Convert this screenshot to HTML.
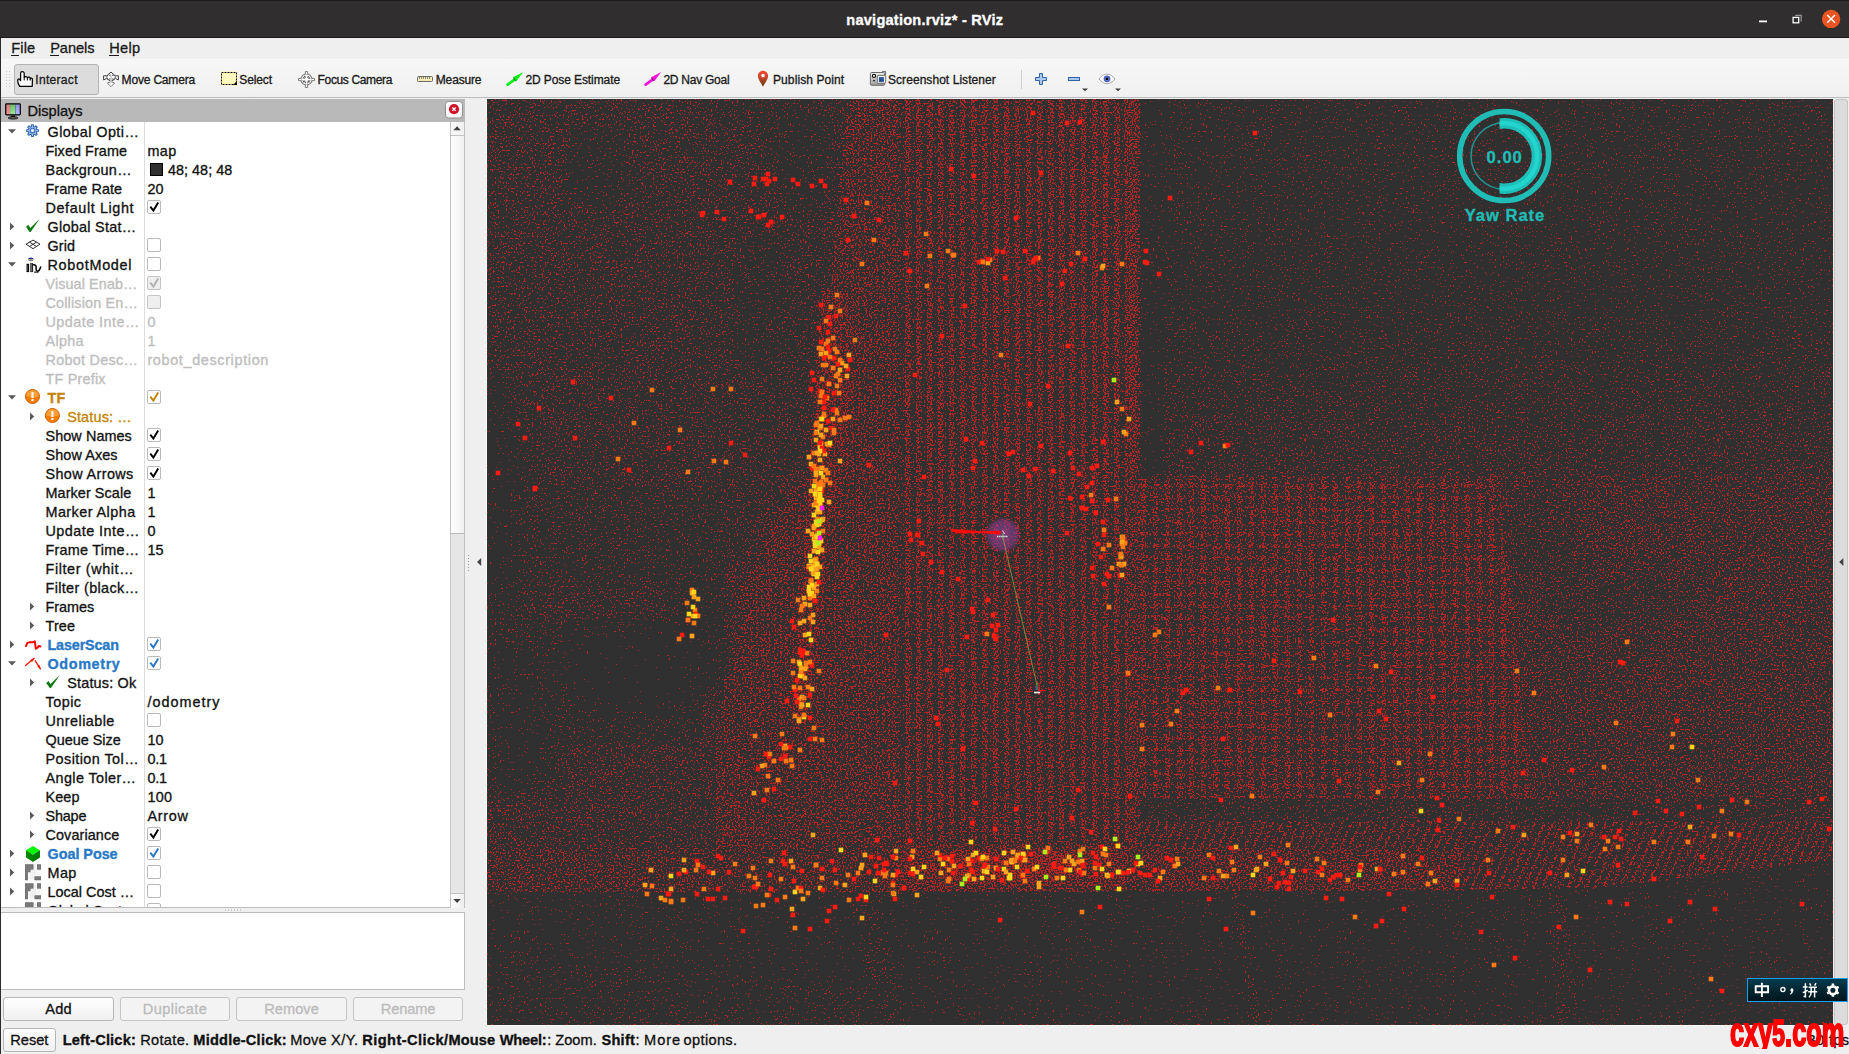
<!DOCTYPE html>
<html><head><meta charset="utf-8"><title>navigation.rviz* - RViz</title>
<style>
html,body{margin:0;padding:0;background:#efefef;}
body{width:1849px;height:1054px;overflow:hidden;position:relative;font-family:"Liberation Sans",sans-serif;}
.a{position:absolute;}
.t{position:absolute;white-space:pre;line-height:1;font-family:"Liberation Sans",sans-serif;-webkit-text-stroke:0.32px currentColor;}
svg{position:absolute;overflow:visible;}
.btn{position:absolute;box-sizing:border-box;border:1px solid #b6b6b6;border-radius:3px;background:linear-gradient(#fefefe,#f0f0f0);}
.cb{position:absolute;box-sizing:border-box;width:14px;height:14px;border:1px solid #b9b9b9;border-radius:2px;background:#fff;}
.cb.d{background:#efefef;border-color:#c4c4c4;}
</style></head><body>

<div class="a" style="left:0;top:0;width:1849px;height:38px;background:#302e2f;"></div>
<div class="a" style="left:0;top:0;width:1849px;height:1px;background:#1d1c1c;"></div>
<div class="a" style="left:0;top:37px;width:1849px;height:1px;background:#1b1a1a;"></div>
<span class="t" style="left:846.30px;top:12.67px;font-size:14.6px;font-weight:700;color:#fff;letter-spacing:0.220px;">navigation.rviz* - RViz</span>
<svg class="a" style="left:1739px;top:0" width="110" height="38" viewBox="1739 0 110 38">
<rect x="1759" y="20.5" width="8" height="1.8" fill="#fff"/>
<path d="M1795.2 15.4H1801.2V21.4" fill="none" stroke="#9a9a9a" stroke-width="1.2"/>
<rect x="1793.1" y="17.4" width="5.6" height="5.4" fill="none" stroke="#fff" stroke-width="1.3"/>
<circle cx="1831.1" cy="18.9" r="9.2" fill="#e95420"/>
<path d="M1827.2 15 L1835 22.8 M1835 15 L1827.2 22.8" stroke="#fff" stroke-width="1.5" fill="none"/>
</svg>
<div class="a" style="left:0;top:38px;width:1849px;height:22px;background:#efefef;"></div>
<div class="a" style="left:0;top:59px;width:1849px;height:1px;background:#f9f9f9;"></div>
<span class="t" style="left:11.30px;top:41.47px;font-size:14.6px;font-weight:400;color:#1a1a1a;letter-spacing:0.121px;">File</span>
<div class="a" style="left:11.3px;top:55px;width:7.5px;height:1.3px;background:#1a1a1a;"></div>
<span class="t" style="left:50.20px;top:41.47px;font-size:14.6px;font-weight:400;color:#1a1a1a;letter-spacing:-0.054px;">Panels</span>
<div class="a" style="left:50.2px;top:55px;width:9px;height:1.3px;background:#1a1a1a;"></div>
<span class="t" style="left:109.30px;top:41.47px;font-size:14.6px;font-weight:400;color:#1a1a1a;letter-spacing:0.246px;">Help</span>
<div class="a" style="left:109.3px;top:55px;width:10px;height:1.3px;background:#1a1a1a;"></div>
<div class="a" style="left:0;top:60px;width:1849px;height:37px;background:linear-gradient(#f7f7f7,#f0f0f0);"></div>
<div class="a" style="left:0;top:97px;width:1849px;height:1px;background:#bcbcbc;"></div>
<div class="a" style="left:0;top:98px;width:1849px;height:1px;background:#efefef;"></div>
<svg class="a" style="left:5px;top:70px" width="6" height="18"><g fill="#c8c8c8"><rect x="1" y="1" width="1" height="1"/><rect x="4" y="1" width="1" height="1"/><rect x="1" y="4" width="1" height="1"/><rect x="4" y="4" width="1" height="1"/><rect x="1" y="7" width="1" height="1"/><rect x="4" y="7" width="1" height="1"/><rect x="1" y="10" width="1" height="1"/><rect x="4" y="10" width="1" height="1"/><rect x="1" y="13" width="1" height="1"/><rect x="4" y="13" width="1" height="1"/><rect x="1" y="16" width="1" height="1"/><rect x="4" y="16" width="1" height="1"/></g></svg>
<div class="a" style="left:14px;top:64px;width:85px;height:31px;box-sizing:border-box;border:1px solid #b3b3b3;border-radius:3px;background:#dcdcdc;"></div>
<span class="t" style="left:35.30px;top:73.73px;font-size:12.0px;font-weight:400;color:#1a1a1a;letter-spacing:0.309px;">Interact</span>
<span class="t" style="left:121.60px;top:73.73px;font-size:12.0px;font-weight:400;color:#1a1a1a;letter-spacing:-0.178px;">Move Camera</span>
<span class="t" style="left:239.30px;top:73.73px;font-size:12.0px;font-weight:400;color:#1a1a1a;letter-spacing:-0.110px;">Select</span>
<span class="t" style="left:317.60px;top:73.73px;font-size:12.0px;font-weight:400;color:#1a1a1a;letter-spacing:-0.359px;">Focus Camera</span>
<span class="t" style="left:435.80px;top:73.73px;font-size:12.0px;font-weight:400;color:#1a1a1a;letter-spacing:-0.170px;">Measure</span>
<span class="t" style="left:525.40px;top:73.73px;font-size:12.0px;font-weight:400;color:#1a1a1a;letter-spacing:-0.090px;">2D Pose Estimate</span>
<span class="t" style="left:663.40px;top:73.73px;font-size:12.0px;font-weight:400;color:#1a1a1a;letter-spacing:-0.246px;">2D Nav Goal</span>
<span class="t" style="left:773.00px;top:73.73px;font-size:12.0px;font-weight:400;color:#1a1a1a;letter-spacing:0.096px;">Publish Point</span>
<span class="t" style="left:888.00px;top:73.73px;font-size:12.0px;font-weight:400;color:#1a1a1a;letter-spacing:0.056px;">Screenshot Listener</span>
<div class="a" style="left:1021px;top:70px;width:1px;height:19px;background:#d0d0d0;"></div>
<svg class="a" style="left:0;top:60px" width="1849" height="38" viewBox="0 60 1849 38">
<defs>
<linearGradient id="gpin" x1="0" y1="0" x2="0" y2="1"><stop offset="0" stop-color="#ee4a2c"/><stop offset="0.45" stop-color="#c8472a"/><stop offset="1" stop-color="#57390c"/></linearGradient>
<linearGradient id="gcam" x1="0" y1="0" x2="0" y2="1"><stop offset="0" stop-color="#f4f4f4"/><stop offset="1" stop-color="#9c9c9c"/></linearGradient>
<linearGradient id="gblue" x1="0" y1="0" x2="0" y2="1"><stop offset="0" stop-color="#3a68b0"/><stop offset="1" stop-color="#123a80"/></linearGradient>
</defs>
<!-- Interact: hand -->
<g transform="translate(17 71)">
<path d="M5.2 0.7C4.2 0.7 3.6 1.3 3.6 2.3V9.6L2.6 8.4C1.9 7.6 0.7 8 0.7 9.2C0.7 11.4 1.5 13.5 2.7 15.3H15.2C15.3 13.6 15.4 12 15.4 10.5V8.2C15.4 6.9 13.4 6.8 13.2 7.9V7.2C13 5.9 10.6 5.9 10.4 7.1V6.6C10.2 5.3 7.5 5.3 7.2 6.6V2.3C7.2 1.3 6.4 0.7 5.2 0.7Z" fill="#fff" stroke="#000" stroke-width="1.25" stroke-linejoin="round"/>
<path d="M7.2 6.6V9.4M10.4 7.1V9.4M13.2 7.9V9.6" stroke="#000" stroke-width="1" fill="none"/>
</g>
<!-- Move Camera -->
<g transform="translate(103 71.5)" fill="#fff" stroke="#3a3a3a" stroke-width="1">
<rect x="7" y="3.5" width="2" height="9" fill="#c9c9c9" stroke="none"/>
<path d="M8 0.6L3.8 4.3H0.6V8.4L3.4 7L8 9.8L12.6 7L15.4 8.4V4.3H12.2Z" fill="#fff" stroke-linejoin="round"/>
<ellipse cx="8" cy="5.6" rx="4.4" ry="2" fill="none" stroke-dasharray="1.6 1.1"/>
<path d="M4.4 11.6L8 15.2L11.6 11.6L8 9.9Z" stroke="#7c7c7c" fill="#fff"/>
<rect x="7.2" y="4" width="1.6" height="7.5" fill="#c9c9c9" stroke="none"/>
</g>
<!-- Select -->
<g transform="translate(221 72)">
<rect x="0.5" y="0.5" width="15" height="12" fill="#fdf7c0" stroke="#fff79a" stroke-width="2"/>
<rect x="0.5" y="0.5" width="15" height="12" fill="none" stroke="#fff" stroke-width="1"/>
<rect x="0.5" y="0.5" width="15" height="12" fill="none" stroke="#000" stroke-width="1" stroke-dasharray="2 1"/>
<path d="M16 9V13H12Z" fill="#000"/>
</g>
<!-- Focus Camera -->
<g transform="translate(306.5 79.5)" fill="none" stroke="#7d7d7d">
<circle r="5.6" stroke-width="1.1" fill="#fff"/>
<path d="M-1.1 -5.4V-8H1.1V-5.4M-1.1 5.4V8H1.1V5.4M-5.4 -1.1H-8V1.1H-5.4M5.4 -1.1H8V1.1H5.4" stroke-width="1" fill="#fff"/>
<circle r="2.9" stroke="#585858" stroke-width="2.5" stroke-dasharray="1.15 0.45"/>
<path d="M0 -4.7V4.7M-4.7 0H4.7" stroke="#fff" stroke-width="1.3"/><circle r="1.2" fill="#fff" stroke="none"/>
</g>
<!-- Measure -->
<g transform="translate(417 76)">
<rect x="-0.5" y="-0.5" width="17" height="7" rx="1.5" fill="#fff"/>
<rect x="0.5" y="0.5" width="15" height="5" rx="0.8" fill="#f6edb4" stroke="#666" stroke-width="1"/>
<path d="M2.5 1V3M4.5 1V3M6.5 1V3M8.5 1V3M10.5 1V3M12.5 1V3" stroke="#7a7a72" stroke-width="0.9"/>
</g>
<!-- 2D Pose Estimate (green arrow) -->
<g>
<path d="M507.6 84.6L515.6 78.8" stroke="#00ee14" stroke-width="2.7" stroke-linecap="round"/>
<path d="M523.2 71.9L513.6 77L516.6 80.9Z" fill="#00f016"/>
<path d="M513.6 77L516.6 80.9L515.4 81.3L512.9 77.8Z" fill="#0a8c10"/>
</g>
<!-- 2D Nav Goal (magenta arrow) -->
<g transform="translate(138 0)">
<path d="M507.6 84.6L515.6 78.8" stroke="#ee14d6" stroke-width="2.7" stroke-linecap="round"/>
<path d="M523.2 71.9L513.6 77L516.6 80.9Z" fill="#f318dc"/>
<path d="M513.6 77L516.6 80.9L515.4 81.3L512.9 77.8Z" fill="#8c0a7c"/>
</g>
<!-- Publish Point pin -->
<path d="M763 86.7C761 82.5 757.9 79.4 757.9 75.9C757.9 73 760.2 70.8 763 70.8C765.8 70.8 768.1 73 768.1 75.9C768.1 79.4 765 82.5 763 86.7Z" fill="url(#gpin)"/>
<circle cx="763" cy="75.6" r="1.8" fill="#fff"/>
<!-- Screenshot Listener -->
<g>
<path d="M881 74.5L882.5 71.4H885.6V75.5" fill="#ddd" stroke="#6a6a6a" stroke-width="1"/>
<rect x="870.4" y="72.5" width="14.2" height="12.8" rx="1.2" fill="url(#gcam)" stroke="#6a6a6a" stroke-width="1"/>
<circle cx="874" cy="75.9" r="1.6" fill="#eee" stroke="#000" stroke-width="1.1"/>
<ellipse cx="874" cy="80.6" rx="1.2" ry="0.9" fill="#333"/>
<rect x="877.3" y="75.3" width="8.4" height="7.9" rx="0.8" fill="#f2f2f2" stroke="#6a6a6a" stroke-width="1"/>
<rect x="879" y="77" width="4.9" height="4.8" fill="url(#gblue)"/>
</g>
<!-- plus / minus / eye -->
<path d="M1039.5 73.5H1042.5V77.5H1046.5V80.5H1042.5V84.5H1039.5V80.5H1035.5V77.5H1039.5Z" fill="#a9c8ec" stroke="#2d62a8" stroke-width="1"/>
<rect x="1068.5" y="77.5" width="11" height="3" fill="#a9c8ec" stroke="#2d62a8" stroke-width="1"/>
<path d="M1082 88.4H1088L1085 91.2Z" fill="#3c3c3c"/>
<path d="M1099 79C1102 75 1104.6 74.2 1107 74.2C1109.4 74.2 1112 75 1115 79C1112 82.6 1109.4 83.6 1107 83.6C1104.6 83.6 1102 82.6 1099 79Z" fill="#fff" stroke="#9a9a9a" stroke-width="0.9"/>
<circle cx="1107" cy="78.8" r="3.4" fill="#4c64c0"/>
<circle cx="1107" cy="78.8" r="2.2" fill="#7a8fdc" opacity="0.5"/>
<circle cx="1107" cy="78.8" r="1.4" fill="#000"/>
<path d="M1115 88.4H1121L1118 91.2Z" fill="#3c3c3c"/>
</svg>
<div class="a" style="left:0;top:38px;width:1px;height:1016px;background:#2b2b2b;"></div>
<div class="a" style="left:1px;top:99px;width:464px;height:23px;background:#b9b9b9;"></div>
<span class="t" style="left:27.60px;top:103.87px;font-size:14.6px;font-weight:400;color:#111;letter-spacing:-0.020px;">Displays</span>
<svg class="a" style="left:0;top:99px" width="470" height="24" viewBox="0 99 470 24">
<defs><linearGradient id="gr" x1="0" y1="0" x2="0" y2="1"><stop offset="0" stop-color="#cf7f7f"/><stop offset="1" stop-color="#ef9090"/></linearGradient>
<linearGradient id="gg" x1="0" y1="0" x2="0" y2="1"><stop offset="0" stop-color="#6fbf6f"/><stop offset="1" stop-color="#98e898"/></linearGradient>
<linearGradient id="gb" x1="0" y1="0" x2="0" y2="1"><stop offset="0" stop-color="#9090e0"/><stop offset="1" stop-color="#b4b4ff"/></linearGradient></defs>
<rect x="5.1" y="103.2" width="15.8" height="12.3" rx="1.4" fill="#000"/>
<rect x="6.3" y="104.5" width="3.8" height="9.7" fill="url(#gr)"/>
<rect x="10.1" y="104.5" width="5.4" height="9.7" fill="url(#gg)"/>
<rect x="15.5" y="104.5" width="4.2" height="9.7" fill="url(#gb)"/>
<path d="M11.4 115.4H14.6L15.2 117H10.8Z" fill="#000"/>
<ellipse cx="13" cy="117.9" rx="4.8" ry="1.1" fill="#888" stroke="#000" stroke-width="0.9"/>
<rect x="445.5" y="101.5" width="17" height="16.5" rx="3" fill="#fafafa" stroke="#8e8e8e" stroke-width="1"/>
<circle cx="454" cy="109.2" r="5.1" fill="#d0142c"/>
<path d="M452.4 107.6L455.6 110.8M455.6 107.6L452.4 110.8" stroke="#fff" stroke-width="1.35"/>
</svg>
<div class="a" style="left:1px;top:122px;width:449px;height:785px;background:#fff;"></div>
<div class="a" style="left:1px;top:907px;width:464px;height:1px;background:#bdbdbd;"></div>
<div class="a" style="left:144px;top:122px;width:1px;height:785px;background:#dcdcdc;"></div>
<div class="a" style="left:450px;top:122px;width:15px;height:785px;box-sizing:border-box;border-left:1px solid #c2c2c2;border-right:1px solid #c2c2c2;background:#e6e6e6;"></div>
<div class="a" style="left:451px;top:122px;width:13px;height:13px;background:linear-gradient(90deg,#fbfbfb,#efefef);border-bottom:1px solid #c2c2c2;"></div>
<div class="a" style="left:451px;top:136px;width:13px;height:397px;background:linear-gradient(90deg,#fefefe,#f1f1f1);border-bottom:1px solid #b9b9b9;"></div>
<div class="a" style="left:451px;top:893px;width:13px;height:14px;background:linear-gradient(90deg,#fbfbfb,#efefef);border-top:1px solid #c2c2c2;"></div>
<svg class="a" style="left:450px;top:122px" width="15" height="786"><path d="M3.4 8.2H10.8L7.1 4.2Z" fill="#3f3f3f"/><path d="M3.4 777H10.8L7.1 781Z" fill="#3f3f3f"/></svg>
<div class="a" style="left:1px;top:122px;width:449px;height:785px;overflow:hidden;"><div class="a" style="left:-1px;top:-122px;width:470px;height:950px;">
<span class="t" style="left:47.50px;top:124.64px;font-size:14.4px;font-weight:400;color:#111;letter-spacing:0.451px;">Global Opti…</span>
<span class="t" style="left:45.50px;top:143.64px;font-size:14.4px;font-weight:400;color:#111;letter-spacing:0.067px;">Fixed Frame</span>
<span class="t" style="left:147.40px;top:143.64px;font-size:14.4px;font-weight:400;color:#111;letter-spacing:0.400px;">map</span>
<span class="t" style="left:45.50px;top:162.64px;font-size:14.4px;font-weight:400;color:#111;letter-spacing:0.320px;">Backgroun…</span>
<div class="a" style="left:150px;top:163px;width:13px;height:13px;box-sizing:border-box;border:1px solid #000;background:#303030;"></div>
<span class="t" style="left:167.90px;top:162.64px;font-size:14.4px;font-weight:400;color:#111;letter-spacing:0.038px;">48; 48; 48</span>
<span class="t" style="left:45.50px;top:181.64px;font-size:14.4px;font-weight:400;color:#111;letter-spacing:0.072px;">Frame Rate</span>
<span class="t" style="left:147.40px;top:181.64px;font-size:14.4px;font-weight:400;color:#111;letter-spacing:0.142px;">20</span>
<span class="t" style="left:45.50px;top:200.64px;font-size:14.4px;font-weight:400;color:#111;letter-spacing:0.607px;">Default Light</span>
<div class="cb" style="left:147px;top:200px;"></div>
<span class="t" style="left:47.50px;top:219.64px;font-size:14.4px;font-weight:400;color:#111;letter-spacing:0.276px;">Global Stat…</span>
<span class="t" style="left:47.50px;top:238.64px;font-size:14.4px;font-weight:400;color:#111;letter-spacing:0.078px;">Grid</span>
<div class="cb" style="left:147px;top:238px;"></div>
<span class="t" style="left:47.50px;top:257.64px;font-size:14.4px;font-weight:400;color:#111;letter-spacing:0.709px;">RobotModel</span>
<div class="cb" style="left:147px;top:257px;"></div>
<span class="t" style="left:45.50px;top:276.64px;font-size:14.4px;font-weight:400;color:#bdbdbd;letter-spacing:0.097px;">Visual Enab…</span>
<div class="cb d" style="left:147px;top:276px;"></div>
<span class="t" style="left:45.50px;top:295.64px;font-size:14.4px;font-weight:400;color:#bdbdbd;letter-spacing:0.170px;">Collision En…</span>
<div class="cb d" style="left:147px;top:295px;"></div>
<span class="t" style="left:45.50px;top:314.64px;font-size:14.4px;font-weight:400;color:#bdbdbd;letter-spacing:0.459px;">Update Inte…</span>
<span class="t" style="left:147.40px;top:314.64px;font-size:14.4px;font-weight:400;color:#bdbdbd;letter-spacing:0.384px;">0</span>
<span class="t" style="left:45.50px;top:333.64px;font-size:14.4px;font-weight:400;color:#bdbdbd;letter-spacing:0.298px;">Alpha</span>
<span class="t" style="left:147.40px;top:333.64px;font-size:14.4px;font-weight:400;color:#bdbdbd;letter-spacing:0.384px;">1</span>
<span class="t" style="left:45.50px;top:352.64px;font-size:14.4px;font-weight:400;color:#bdbdbd;letter-spacing:0.275px;">Robot Desc…</span>
<span class="t" style="left:147.40px;top:352.64px;font-size:14.4px;font-weight:400;color:#bdbdbd;letter-spacing:0.658px;">robot_description</span>
<span class="t" style="left:45.50px;top:371.64px;font-size:14.4px;font-weight:400;color:#bdbdbd;letter-spacing:0.203px;">TF Prefix</span>
<span class="t" style="left:47.50px;top:390.64px;font-size:14.4px;font-weight:700;color:#c48200;letter-spacing:0.103px;">TF</span>
<div class="cb" style="left:147px;top:390px;"></div>
<span class="t" style="left:67.20px;top:409.64px;font-size:14.4px;font-weight:400;color:#c48200;letter-spacing:0.168px;">Status: …</span>
<span class="t" style="left:45.50px;top:428.64px;font-size:14.4px;font-weight:400;color:#111;letter-spacing:0.082px;">Show Names</span>
<div class="cb" style="left:147px;top:428px;"></div>
<span class="t" style="left:45.50px;top:447.64px;font-size:14.4px;font-weight:400;color:#111;letter-spacing:0.100px;">Show Axes</span>
<div class="cb" style="left:147px;top:447px;"></div>
<span class="t" style="left:45.50px;top:466.64px;font-size:14.4px;font-weight:400;color:#111;letter-spacing:0.374px;">Show Arrows</span>
<div class="cb" style="left:147px;top:466px;"></div>
<span class="t" style="left:45.50px;top:485.64px;font-size:14.4px;font-weight:400;color:#111;letter-spacing:0.085px;">Marker Scale</span>
<span class="t" style="left:147.40px;top:485.64px;font-size:14.4px;font-weight:400;color:#111;letter-spacing:0.384px;">1</span>
<span class="t" style="left:45.50px;top:504.64px;font-size:14.4px;font-weight:400;color:#111;letter-spacing:0.442px;">Marker Alpha</span>
<span class="t" style="left:147.40px;top:504.64px;font-size:14.4px;font-weight:400;color:#111;letter-spacing:0.384px;">1</span>
<span class="t" style="left:45.50px;top:523.64px;font-size:14.4px;font-weight:400;color:#111;letter-spacing:0.459px;">Update Inte…</span>
<span class="t" style="left:147.40px;top:523.64px;font-size:14.4px;font-weight:400;color:#111;letter-spacing:0.384px;">0</span>
<span class="t" style="left:45.50px;top:542.64px;font-size:14.4px;font-weight:400;color:#111;letter-spacing:0.240px;">Frame Time…</span>
<span class="t" style="left:147.40px;top:542.64px;font-size:14.4px;font-weight:400;color:#111;letter-spacing:0.142px;">15</span>
<span class="t" style="left:45.50px;top:561.64px;font-size:14.4px;font-weight:400;color:#111;letter-spacing:0.610px;">Filter (whit…</span>
<span class="t" style="left:45.50px;top:580.64px;font-size:14.4px;font-weight:400;color:#111;letter-spacing:0.360px;">Filter (black…</span>
<span class="t" style="left:45.50px;top:599.64px;font-size:14.4px;font-weight:400;color:#111;letter-spacing:0.003px;">Frames</span>
<span class="t" style="left:45.50px;top:618.64px;font-size:14.4px;font-weight:400;color:#111;letter-spacing:0.159px;">Tree</span>
<span class="t" style="left:47.50px;top:637.64px;font-size:14.4px;font-weight:700;color:#2878c6;letter-spacing:-0.166px;">LaserScan</span>
<div class="cb" style="left:147px;top:637px;"></div>
<span class="t" style="left:47.50px;top:656.64px;font-size:14.4px;font-weight:700;color:#2878c6;letter-spacing:0.627px;">Odometry</span>
<div class="cb" style="left:147px;top:656px;"></div>
<span class="t" style="left:67.20px;top:675.64px;font-size:14.4px;font-weight:400;color:#111;letter-spacing:0.201px;">Status: Ok</span>
<span class="t" style="left:45.50px;top:694.64px;font-size:14.4px;font-weight:400;color:#111;letter-spacing:0.481px;">Topic</span>
<span class="t" style="left:147.40px;top:694.64px;font-size:14.4px;font-weight:400;color:#111;letter-spacing:1.000px;">/odometry</span>
<span class="t" style="left:45.50px;top:713.64px;font-size:14.4px;font-weight:400;color:#111;letter-spacing:0.450px;">Unreliable</span>
<div class="cb" style="left:147px;top:713px;"></div>
<span class="t" style="left:45.50px;top:732.64px;font-size:14.4px;font-weight:400;color:#111;letter-spacing:0.010px;">Queue Size</span>
<span class="t" style="left:147.40px;top:732.64px;font-size:14.4px;font-weight:400;color:#111;letter-spacing:0.142px;">10</span>
<span class="t" style="left:45.50px;top:751.64px;font-size:14.4px;font-weight:400;color:#111;letter-spacing:0.444px;">Position Tol…</span>
<span class="t" style="left:147.40px;top:751.64px;font-size:14.4px;font-weight:400;color:#111;letter-spacing:-0.172px;">0.1</span>
<span class="t" style="left:45.50px;top:770.64px;font-size:14.4px;font-weight:400;color:#111;letter-spacing:0.398px;">Angle Toler…</span>
<span class="t" style="left:147.40px;top:770.64px;font-size:14.4px;font-weight:400;color:#111;letter-spacing:-0.172px;">0.1</span>
<span class="t" style="left:45.50px;top:789.64px;font-size:14.4px;font-weight:400;color:#111;letter-spacing:0.098px;">Keep</span>
<span class="t" style="left:147.40px;top:789.64px;font-size:14.4px;font-weight:400;color:#111;letter-spacing:0.295px;">100</span>
<span class="t" style="left:45.50px;top:808.64px;font-size:14.4px;font-weight:400;color:#111;letter-spacing:-0.165px;">Shape</span>
<span class="t" style="left:147.40px;top:808.64px;font-size:14.4px;font-weight:400;color:#111;letter-spacing:0.761px;">Arrow</span>
<span class="t" style="left:45.50px;top:827.64px;font-size:14.4px;font-weight:400;color:#111;letter-spacing:0.110px;">Covariance</span>
<div class="cb" style="left:147px;top:827px;"></div>
<span class="t" style="left:47.50px;top:846.64px;font-size:14.4px;font-weight:700;color:#2878c6;letter-spacing:-0.032px;">Goal Pose</span>
<div class="cb" style="left:147px;top:846px;"></div>
<span class="t" style="left:47.50px;top:865.64px;font-size:14.4px;font-weight:400;color:#111;letter-spacing:0.400px;">Map</span>
<div class="cb" style="left:147px;top:865px;"></div>
<span class="t" style="left:47.50px;top:884.64px;font-size:14.4px;font-weight:400;color:#111;letter-spacing:0.026px;">Local Cost …</span>
<div class="cb" style="left:147px;top:884px;"></div>
<span class="t" style="left:47.50px;top:903.64px;font-size:14.4px;font-weight:400;color:#111;letter-spacing:-0.057px;">Global Cost…</span>
<div class="cb" style="left:147px;top:903px;"></div>
<svg class="a" style="left:0;top:0" width="470" height="950" viewBox="0 0 470 950"><path d="M8 129.2H16L12 133.4Z" fill="#5a5a5a"/>
<g transform="translate(32.5 130.6)"><path d="M-1.14 -3.94L-0.92 -5.83L0.92 -5.83L1.14 -3.94L1.98 -3.59L3.47 -4.77L4.77 -3.47L3.59 -1.98L3.94 -1.14L5.83 -0.92L5.83 0.92L3.94 1.14L3.59 1.98L4.77 3.47L3.47 4.77L1.98 3.59L1.14 3.94L0.92 5.83L-0.92 5.83L-1.14 3.94L-1.98 3.59L-3.47 4.77L-4.77 3.47L-3.59 1.98L-3.94 1.14L-5.83 0.92L-5.83 -0.92L-3.94 -1.14L-3.59 -1.98L-4.77 -3.47L-3.47 -4.77L-1.98 -3.59Z" fill="#a9c1e6" stroke="#2f68bb" stroke-width="1.1" stroke-linejoin="round"/><circle r="2.3" fill="#b4c9ea" stroke="#3b72c2" stroke-width="1.1"/><circle r="1.15" fill="#fff"/></g>
<path d="M150.3 206.6L153.4 210.6L158.2 202.6" fill="none" stroke="#000" stroke-width="1.9" stroke-linejoin="miter"/>
<path d="M10 222.6V230.4L14.2 226.5Z" fill="#5a5a5a"/>
<path d="M26.00 226.80L28.30 224.80L30.30 228.00L39.30 219.10C35.90 224.80 33.10 228.80 30.70 231.90C30.20 232.20 29.50 232.10 29.20 231.50Z" fill="#157a18"/>
<path d="M10 241.6V249.4L14.2 245.5Z" fill="#5a5a5a"/>
<g transform="translate(33 244.7)" fill="none" stroke="#2e2e2e" stroke-width="1"><path d="M0 -4.6L7 -0.5L0 4L-7 -0.5ZM-3.5 -2.6L3.5 1.8M3.5 -2.6L-3.5 1.8"/></g>
<path d="M8 262.2H16L12 266.4Z" fill="#5a5a5a"/>
<g transform="translate(25.5 256.5)"><ellipse cx="5.4" cy="2.6" rx="2.7" ry="1.7" fill="#1a2fa0"/><path d="M2.9 3.1H7.9" stroke="#d8b860" stroke-width="0.9"/><path d="M3.1 3.8Q5.4 5 7.7 3.8" stroke="#888" stroke-width="0.8" fill="none"/>
<path d="M1 7.3H3.6V15.6H1Z" fill="#000"/><path d="M4.6 6.6H7.6V15.6H4.6Z" fill="#222"/><path d="M5.6 7V15" stroke="#bbb" stroke-width="0.8"/><path d="M7.6 8.2C10.2 8 11 9.6 10.6 12.2C10.4 13.8 11.2 14.8 12.6 14.6C14 14.4 14.6 12.4 15.4 10" fill="none" stroke="#000" stroke-width="1.5"/><path d="M8.6 15.6H13" stroke="#000" stroke-width="1.1"/><path d="M1.6 8.2V14.6" stroke="#999" stroke-width="0.7"/></g>
<path d="M150.3 282.6L153.4 286.6L158.2 278.6" fill="none" stroke="#b0b0b0" stroke-width="1.9" stroke-linejoin="miter"/>
<path d="M8 395.2H16L12 399.4Z" fill="#5a5a5a"/>
<g transform="translate(32.5 396.5)"><circle r="7" fill="#f57c00" stroke="#cf5e02" stroke-width="1"/><path d="M-6.4 -0.2A6.4 6.4 0 0 1 6.4 -0.2Q0 2.2 -6.4 -0.2Z" fill="#fba94a" opacity="0.75"/><rect x="-1.1" y="-4.6" width="2.2" height="6.2" rx="0.5" fill="#fff" opacity="0.92"/><rect x="-1.1" y="2.6" width="2.2" height="2" fill="#fff"/></g>
<path d="M150.3 396.6L153.4 400.6L158.2 392.6" fill="none" stroke="#c48200" stroke-width="1.9" stroke-linejoin="miter"/>
<path d="M30 412.6V420.4L34.2 416.5Z" fill="#5a5a5a"/>
<g transform="translate(52.4 415.5)"><circle r="7" fill="#f57c00" stroke="#cf5e02" stroke-width="1"/><path d="M-6.4 -0.2A6.4 6.4 0 0 1 6.4 -0.2Q0 2.2 -6.4 -0.2Z" fill="#fba94a" opacity="0.75"/><rect x="-1.1" y="-4.6" width="2.2" height="6.2" rx="0.5" fill="#fff" opacity="0.92"/><rect x="-1.1" y="2.6" width="2.2" height="2" fill="#fff"/></g>
<path d="M150.3 434.6L153.4 438.6L158.2 430.6" fill="none" stroke="#000" stroke-width="1.9" stroke-linejoin="miter"/>
<path d="M150.3 453.6L153.4 457.6L158.2 449.6" fill="none" stroke="#000" stroke-width="1.9" stroke-linejoin="miter"/>
<path d="M150.3 472.6L153.4 476.6L158.2 468.6" fill="none" stroke="#000" stroke-width="1.9" stroke-linejoin="miter"/>
<path d="M30 602.6V610.4L34.2 606.5Z" fill="#5a5a5a"/>
<path d="M30 621.6V629.4L34.2 625.5Z" fill="#5a5a5a"/>
<path d="M10 640.6V648.4L14.2 644.5Z" fill="#5a5a5a"/>
<path d="M26 646.1L27.4 642.9L30 642.3L32.6 642.3L34.8 641.3L35.8 648.7L37.6 647.7L38.8 645.9L40.4 646.5" fill="none" stroke="#ff0000" stroke-width="2" stroke-linejoin="round" stroke-linecap="round"/>
<path d="M150.3 643.6L153.4 647.6L158.2 639.6" fill="none" stroke="#2878c6" stroke-width="1.9" stroke-linejoin="miter"/>
<path d="M8 661.2H16L12 665.4Z" fill="#5a5a5a"/>
<g stroke="#f01408" fill="#f01408"><path d="M25.2 665.7L34.4 657.9" stroke-width="1.3"/><path d="M34.9 657.9L30.3 659.9L32 661.9Z" stroke="none"/><path d="M35 660.3L40.6 669.1" stroke-width="1.3"/><path d="M40.9 669.9L37.2 666.1L39.4 665.1Z" stroke="none"/></g>
<path d="M150.3 662.6L153.4 666.6L158.2 658.6" fill="none" stroke="#2878c6" stroke-width="1.9" stroke-linejoin="miter"/>
<path d="M30 678.6V686.4L34.2 682.5Z" fill="#5a5a5a"/>
<path d="M46.20 682.90L48.50 680.90L50.50 684.10L59.50 675.20C56.10 680.90 53.30 684.90 50.90 688.00C50.40 688.30 49.70 688.20 49.40 687.60Z" fill="#157a18"/>
<path d="M30 811.6V819.4L34.2 815.5Z" fill="#5a5a5a"/>
<path d="M30 830.6V838.4L34.2 834.5Z" fill="#5a5a5a"/>
<path d="M150.3 833.6L153.4 837.6L158.2 829.6" fill="none" stroke="#000" stroke-width="1.9" stroke-linejoin="miter"/>
<path d="M10 849.6V857.4L14.2 853.5Z" fill="#5a5a5a"/>
<g transform="translate(33 853.9)"><path d="M0 -8L7 -3.6L0 0.8L-7 -3.6Z" fill="#00fb00"/><path d="M-7 -3.6L0 0.8V8L-7 3.6Z" fill="#008800"/><path d="M7 -3.6L0 0.8V8L7 3.6Z" fill="#007c00"/></g>
<path d="M150.3 852.6L153.4 856.6L158.2 848.6" fill="none" stroke="#2878c6" stroke-width="1.9" stroke-linejoin="miter"/>
<path d="M10 868.6V876.4L14.2 872.5Z" fill="#5a5a5a"/>
<g transform="translate(25 864.2)"><rect width="16" height="16" fill="#fff"/><path d="M0 0H8.6V5.6H5.6V8H3V16H0ZM12 0H16V5.6H12ZM9.4 12H16V16H9.4Z" fill="#6e6e6e"/><path d="M0 2H8.6M0 4H8.6M2 0V16M4 0V8M6 0V5.6M12 2H16M12 4H16M14 0V5.6M9.4 14H16M12 12V16M14 12V16M0 6H5.6M0 8H3M0 10H3M0 12H3M0 14H3" stroke="#8a8a8a" stroke-width="0.5" fill="none"/><path d="M6 8V16M8 6V16M10 0V12M3 10H16M3 12H9.4M5.6 6H16M8.6 2H12M8.6 4H12M3 14H9.4M5.6 8H16" stroke="#e4e4e4" stroke-width="0.6" fill="none"/></g>
<path d="M10 887.6V895.4L14.2 891.5Z" fill="#5a5a5a"/>
<g transform="translate(25 883.2)"><rect width="16" height="16" fill="#fff"/><path d="M0 0H8.6V5.6H5.6V8H3V16H0ZM12 0H16V5.6H12ZM9.4 12H16V16H9.4Z" fill="#6e6e6e"/><path d="M0 2H8.6M0 4H8.6M2 0V16M4 0V8M6 0V5.6M12 2H16M12 4H16M14 0V5.6M9.4 14H16M12 12V16M14 12V16M0 6H5.6M0 8H3M0 10H3M0 12H3M0 14H3" stroke="#8a8a8a" stroke-width="0.5" fill="none"/><path d="M6 8V16M8 6V16M10 0V12M3 10H16M3 12H9.4M5.6 6H16M8.6 2H12M8.6 4H12M3 14H9.4M5.6 8H16" stroke="#e4e4e4" stroke-width="0.6" fill="none"/></g>
<path d="M10 906.6V914.4L14.2 910.5Z" fill="#5a5a5a"/>
<g transform="translate(25 902.2)"><rect width="16" height="16" fill="#fff"/><path d="M0 0H8.6V5.6H5.6V8H3V16H0ZM12 0H16V5.6H12ZM9.4 12H16V16H9.4Z" fill="#6e6e6e"/><path d="M0 2H8.6M0 4H8.6M2 0V16M4 0V8M6 0V5.6M12 2H16M12 4H16M14 0V5.6M9.4 14H16M12 12V16M14 12V16M0 6H5.6M0 8H3M0 10H3M0 12H3M0 14H3" stroke="#8a8a8a" stroke-width="0.5" fill="none"/><path d="M6 8V16M8 6V16M10 0V12M3 10H16M3 12H9.4M5.6 6H16M8.6 2H12M8.6 4H12M3 14H9.4M5.6 8H16" stroke="#e4e4e4" stroke-width="0.6" fill="none"/></g></svg>
</div></div>
<svg class="a" style="left:0;top:905px" width="470" height="10"><rect x="225" y="4.5" width="1" height="1" fill="#a8a8a8"/><rect x="228" y="4.5" width="1" height="1" fill="#a8a8a8"/><rect x="231" y="4.5" width="1" height="1" fill="#a8a8a8"/><rect x="234" y="4.5" width="1" height="1" fill="#a8a8a8"/><rect x="237" y="4.5" width="1" height="1" fill="#a8a8a8"/><rect x="240" y="4.5" width="1" height="1" fill="#a8a8a8"/></svg>
<div class="a" style="left:1px;top:912px;width:464px;height:78px;box-sizing:border-box;border:1px solid #bdbdbd;border-left:none;background:#fff;"></div>
<div class="btn" style="left:3px;top:997px;width:111px;height:24px;"></div>
<span class="t" style="left:45.35px;top:1001.87px;font-size:14.6px;font-weight:400;color:#111;letter-spacing:0.110px;">Add</span>
<div class="btn" style="left:120px;top:997px;width:110px;height:24px;background:#f3f3f3;border-color:#c4c4c4;"></div>
<span class="t" style="left:142.75px;top:1001.87px;font-size:14.6px;font-weight:400;color:#bbb;letter-spacing:0.406px;">Duplicate</span>
<div class="btn" style="left:236px;top:997px;width:111px;height:24px;background:#f3f3f3;border-color:#c4c4c4;"></div>
<span class="t" style="left:264.20px;top:1001.87px;font-size:14.6px;font-weight:400;color:#bbb;letter-spacing:0.043px;">Remove</span>
<div class="btn" style="left:353px;top:997px;width:110px;height:24px;background:#f3f3f3;border-color:#c4c4c4;"></div>
<span class="t" style="left:380.85px;top:1001.87px;font-size:14.6px;font-weight:400;color:#bbb;letter-spacing:-0.145px;">Rename</span>
<svg class="a" style="left:465px;top:540px" width="22" height="40"><rect x="3" y="15" width="1" height="1" fill="#9c9c9c"/><rect x="3" y="18" width="1" height="1" fill="#9c9c9c"/><rect x="3" y="21" width="1" height="1" fill="#9c9c9c"/><rect x="3" y="24" width="1" height="1" fill="#9c9c9c"/><rect x="3" y="27" width="1" height="1" fill="#9c9c9c"/><rect x="3" y="30" width="1" height="1" fill="#9c9c9c"/><path d="M16.2 18V26L12 22Z" fill="#444"/></svg>
<div class="a" style="left:1833px;top:99px;width:16px;height:926px;background:#efefef;"></div>
<div class="a" style="left:1834px;top:99px;width:14px;height:926px;box-sizing:border-box;border:1px solid #c4c4c4;border-radius:3px;background:#dcdcdc;"></div>
<svg class="a" style="left:1833px;top:552px" width="16" height="20"><path d="M10.4 6V14L6.2 10Z" fill="#444"/></svg>
<div class="a" style="left:0;top:1025px;width:1849px;height:29px;background:#efefef;"></div>
<div class="a" style="left:0;top:1024px;width:1px;height:30px;background:#2b2b2b;"></div>
<div class="btn" style="left:3px;top:1028px;width:53px;height:24px;"></div>
<span class="t" style="left:10.30px;top:1033.47px;font-size:14.6px;font-weight:400;color:#111;letter-spacing:-0.025px;">Reset</span>
<span class="t" style="left:62.70px;top:1033.37px;font-size:14.6px;font-weight:700;color:#111;letter-spacing:0.176px;">Left-Click:</span>
<span class="t" style="left:140.20px;top:1033.37px;font-size:14.6px;font-weight:400;color:#111;letter-spacing:0.320px;">Rotate.</span>
<span class="t" style="left:193.30px;top:1033.37px;font-size:14.6px;font-weight:700;color:#111;letter-spacing:0.214px;">Middle-Click:</span>
<span class="t" style="left:290.30px;top:1033.37px;font-size:14.6px;font-weight:400;color:#111;letter-spacing:0.203px;">Move</span>
<span class="t" style="left:331.00px;top:1033.37px;font-size:14.6px;font-weight:400;color:#111;letter-spacing:0.424px;">X/Y.</span>
<span class="t" style="left:362.30px;top:1033.37px;font-size:14.6px;font-weight:700;color:#111;letter-spacing:0.427px;">Right-Click/</span>
<span class="t" style="left:448.50px;top:1033.37px;font-size:14.6px;font-weight:700;color:#111;letter-spacing:0.076px;">Mouse</span>
<span class="t" style="left:499.70px;top:1033.37px;font-size:14.6px;font-weight:700;color:#111;letter-spacing:-0.174px;">Wheel:</span>
<span class="t" style="left:547.20px;top:1033.37px;font-size:14.6px;font-weight:400;color:#111;letter-spacing:0.138px;">:</span>
<span class="t" style="left:555.20px;top:1033.37px;font-size:14.6px;font-weight:400;color:#111;letter-spacing:0.048px;">Zoom.</span>
<span class="t" style="left:601.50px;top:1033.37px;font-size:14.6px;font-weight:700;color:#111;letter-spacing:0.233px;">Shift</span>
<span class="t" style="left:635.60px;top:1033.37px;font-size:14.6px;font-weight:400;color:#111;letter-spacing:0.138px;">:</span>
<span class="t" style="left:644.00px;top:1033.37px;font-size:14.6px;font-weight:400;color:#111;letter-spacing:0.988px;">More</span>
<span class="t" style="left:683.60px;top:1033.37px;font-size:14.6px;font-weight:400;color:#111;letter-spacing:0.334px;">options.</span>
<span class="t" style="left:1807.50px;top:1032.87px;font-size:14.6px;font-weight:400;color:#111;letter-spacing:0.372px;">30 fps</span>
<svg class="a" style="left:487px;top:99px;overflow:hidden" width="1346" height="926" viewBox="487 99 1346 926">
<defs>
<filter id="pc" filterUnits="userSpaceOnUse" x="487" y="99" width="1346" height="926" color-interpolation-filters="sRGB">
<feTurbulence type="fractalNoise" baseFrequency="0.62 0.58" numOctaves="1" seed="7" result="n0"/>
<feColorMatrix in="n0" type="matrix" values="1 0 0 0 0  1 0 0 0 0  1 0 0 0 0  0 0 0 0 1" result="n"/>
<feComposite in="n" in2="SourceGraphic" operator="arithmetic" k1="0" k2="1" k3="1" k4="-1" result="s"/>
<feColorMatrix in="s" type="matrix" values="0 0 0 0 0.71  0 0 0 0 0.145  0 0 0 0 0.145  255 0 0 0 0"/>
</filter>
<linearGradient id="gt" x1="0" y1="0" x2="0" y2="1"><stop offset="0" stop-color="#fff" stop-opacity="0"/><stop offset="1" stop-color="#fff" stop-opacity="0.07"/></linearGradient>
<pattern id="vs" patternUnits="userSpaceOnUse" width="6" height="6"><rect width="6" height="6" fill="#000" fill-opacity="0.03"/><rect width="2" height="6" fill="#fff" fill-opacity="0.07"/></pattern>
<pattern id="vs2" patternUnits="userSpaceOnUse" width="11" height="11" x="3"><rect width="11" height="11" fill="#000" fill-opacity="0.13"/><rect width="5.5" height="11" fill="#fff" fill-opacity="0.165"/></pattern>
<pattern id="vs3" patternUnits="userSpaceOnUse" width="12" height="12" x="1" y="4"><rect width="12" height="12" fill="#000" fill-opacity="0.11"/><rect width="5" height="12" fill="#fff" fill-opacity="0.12"/><rect width="12" height="4" fill="#fff" fill-opacity="0.08"/></pattern>
<pattern id="ds" patternUnits="userSpaceOnUse" width="8" height="8" patternTransform="rotate(24)"><rect width="8" height="8" fill="#000" fill-opacity="0.12"/><rect width="3" height="8" fill="#fff" fill-opacity="0.19"/></pattern>
<filter id="bl" filterUnits="userSpaceOnUse" x="400" y="0" width="1500" height="1100"><feGaussianBlur stdDeviation="9"/></filter>
<filter id="bl2" filterUnits="userSpaceOnUse" x="400" y="0" width="1500" height="1100"><feGaussianBlur stdDeviation="3"/></filter>
<radialGradient id="cov"><stop offset="0" stop-color="#9a4aa8" stop-opacity="0.62"/><stop offset="0.75" stop-color="#8a3f98" stop-opacity="0.5"/><stop offset="1" stop-color="#7a3888" stop-opacity="0.0"/></radialGradient>
</defs>
<rect x="487" y="99" width="1346" height="926" fill="#303030"/>
<g filter="url(#pc)">
<rect x="487" y="99" width="1346" height="926" fill="rgb(86,86,86)"/>
<rect x="487" y="99" width="370" height="520" fill="rgb(93,93,93)" />
<g filter="url(#bl)">
<polygon points="487,99 720,99 650,250 487,300" fill="rgb(95,95,95)" />
<ellipse cx="600" cy="170" rx="38" ry="45" fill="rgb(83,83,83)" />
<ellipse cx="800" cy="150" rx="30" ry="60" fill="rgb(82,82,82)" />
<ellipse cx="760" cy="300" rx="30" ry="70" fill="rgb(86,86,86)" />
<ellipse cx="487" cy="500" rx="42" ry="125" fill="rgb(78,78,78)" />
<rect x="520" y="500" width="200" height="90" fill="rgb(88,88,88)" />
</g>
<rect x="1140" y="99" width="693" height="381" fill="rgb(83,83,83)" />
<rect x="1140" y="300" width="693" height="180" fill="url(#gt)"/>
<rect x="1142" y="99" width="22" height="381" fill="rgb(77,77,77)" />
<polygon points="848,99 1140,99 1140,476 1833,476 1833,892 487,892 487,800 600,765 716,745 735,600 775,520 806,470 820,400 830,290" fill="rgb(109,109,109)" />
<polygon points="1140,476 1833,476 1833,892 1140,892" fill="rgb(102,102,102)" />
<polygon points="1140,476 1497,476 1528,798 1140,798" fill="rgb(108,108,108)" />
<polygon points="1494,476 1500,476 1531,798 1525,798" fill="rgb(114,114,114)" />
<polygon points="487,745 716,745 716,892 487,892" fill="rgb(97,97,97)" />
<polygon points="487,848 700,848 700,892 487,892" fill="rgb(105,105,105)" />
<polygon points="735,600 775,520 806,470 790,470 755,520 712,600 700,745 716,745" fill="rgb(100,100,100)" />
<rect x="848" y="99" width="292" height="36" fill="rgb(112,112,112)" />
<polygon points="822,290 850,290 850,420 830,520 812,720 792,720 806,520" fill="rgb(118,118,118)" />
<rect x="1129" y="99" width="8" height="790" fill="rgb(114,114,114)" />
<rect x="1129" y="99" width="8" height="381" fill="rgb(120,120,120)" />
<rect x="1101" y="99" width="5" height="381" fill="rgb(114,114,114)" />
<polygon points="848,99 900,99 900,830 735,830 745,600 806,470 830,290" fill="url(#vs)"/>
<polygon points="900,99 1128,99 1128,840 900,840" fill="url(#vs2)"/>
<g filter="url(#bl)">
<ellipse cx="1540" cy="530" rx="35" ry="55" fill="rgb(94,94,94)" />
<ellipse cx="1615" cy="597" rx="85" ry="28" fill="rgb(94,94,94)" />
<ellipse cx="1330" cy="690" rx="40" ry="100" fill="rgb(104,104,104)" />
</g>
<rect x="1140" y="799" width="693" height="22" fill="rgb(91,91,91)" />
<polygon points="1140,822 1833,822 1833,892 1140,892" fill="url(#ds)"/>
<polygon points="1140,476 1497,476 1528,798 1140,798" fill="url(#vs3)"/>
<g filter="url(#bl)">
<ellipse cx="640" cy="668" rx="80" ry="42" fill="rgb(69,69,69)" />
<ellipse cx="700" cy="640" rx="25" ry="60" fill="rgb(75,75,75)" />
<polygon points="487,650 540,650 555,790 487,790" fill="rgb(77,77,77)" />
</g>
<polygon points="650,850 880,846 880,893 650,894" fill="rgb(105,105,105)" />
<polygon points="880,846 1135,842 1135,892 880,893" fill="rgb(112,112,112)" />
<polygon points="1135,846 1460,850 1460,890 1135,892" fill="rgb(112,112,112)" />
<g filter="url(#bl2)">
<polygon points="900,852 1130,848 1130,886 900,888" fill="rgb(120,120,120)" />
<ellipse cx="1015" cy="865" rx="72" ry="15" fill="rgb(131,131,131)" />
</g>
<polygon points="487,893 1420,891 1600,888 1833,860 1833,1024 487,1024" fill="rgb(76,76,76)" />
<polygon points="487,893 760,893 760,1024 487,1024" fill="rgb(78,78,78)" />
<polygon points="1548,893 1566,893 1580,1024 1556,1024" fill="rgb(88,88,88)" />
<polygon points="850,893 880,893 905,1024 880,1024" fill="rgb(87,87,87)" />
<polygon points="1232,893 1240,893 1262,1024 1252,1024" fill="rgb(89,89,89)" />
<polygon points="487,960 900,985 900,1024 487,1024" fill="rgb(82,82,82)" />
</g>
<g>
<rect x="833.7" y="313.7" width="4.6" height="4.6" fill="#ff1a12"/>
<rect x="826.7" y="314.7" width="4.6" height="4.6" fill="#ff1a12"/>
<rect x="818.7" y="302.7" width="4.6" height="4.6" fill="#ff1a12"/>
<rect x="816.7" y="325.7" width="4.6" height="4.6" fill="#ff1a12"/>
<rect x="818.7" y="339.7" width="4.6" height="4.6" fill="#ff1a12"/>
<rect x="825.7" y="329.7" width="4.6" height="4.6" fill="#ff1a12"/>
<rect x="837.7" y="308.7" width="4.6" height="4.6" fill="#ff7a14"/>
<rect x="834.7" y="292.7" width="4.6" height="4.6" fill="#ff7a14"/>
<rect x="828.7" y="304.7" width="4.6" height="4.6" fill="#ff7a14"/>
<rect x="823.7" y="318.7" width="4.6" height="4.6" fill="#ff7a14"/>
<rect x="827.7" y="321.7" width="4.6" height="4.6" fill="#ff1a12"/>
<rect x="825.7" y="338.7" width="4.6" height="4.6" fill="#ff7a14"/>
<rect x="818.7" y="351.7" width="4.6" height="4.6" fill="#ffa41c"/>
<rect x="846.7" y="352.7" width="4.6" height="4.6" fill="#ffa41c"/>
<rect x="831.7" y="355.7" width="4.6" height="4.6" fill="#ff1a12"/>
<rect x="845.7" y="366.7" width="4.6" height="4.6" fill="#ff1a12"/>
<rect x="842.7" y="415.7" width="4.6" height="4.6" fill="#ff7a14"/>
<rect x="820.7" y="362.7" width="4.6" height="4.6" fill="#ff7a14"/>
<rect x="823.7" y="341.7" width="4.6" height="4.6" fill="#ff7a14"/>
<rect x="835.7" y="371.7" width="4.6" height="4.6" fill="#ff7a14"/>
<rect x="822.7" y="394.7" width="4.6" height="4.6" fill="#ff1a12"/>
<rect x="825.7" y="418.7" width="4.6" height="4.6" fill="#ff1a12"/>
<rect x="826.7" y="381.7" width="4.6" height="4.6" fill="#ff1a12"/>
<rect x="834.7" y="383.7" width="4.6" height="4.6" fill="#ff7a14"/>
<rect x="819.7" y="346.7" width="4.6" height="4.6" fill="#ff7a14"/>
<rect x="818.7" y="416.7" width="4.6" height="4.6" fill="#ffa41c"/>
<rect x="825.7" y="344.7" width="4.6" height="4.6" fill="#ff1a12"/>
<rect x="818.7" y="393.7" width="4.6" height="4.6" fill="#ff7a14"/>
<rect x="824.7" y="395.7" width="4.6" height="4.6" fill="#ff7a14"/>
<rect x="824.7" y="352.7" width="4.6" height="4.6" fill="#ff1a12"/>
<rect x="821.7" y="413.7" width="4.6" height="4.6" fill="#ff7a14"/>
<rect x="817.7" y="388.7" width="4.6" height="4.6" fill="#ff1a12"/>
<rect x="819.7" y="376.7" width="4.6" height="4.6" fill="#ff7a14"/>
<rect x="836.7" y="390.7" width="4.6" height="4.6" fill="#ff7a14"/>
<rect x="830.7" y="335.7" width="4.6" height="4.6" fill="#ff7a14"/>
<rect x="826.7" y="381.7" width="4.6" height="4.6" fill="#ff7a14"/>
<rect x="839.7" y="360.7" width="4.6" height="4.6" fill="#ffa41c"/>
<rect x="808.7" y="386.7" width="4.6" height="4.6" fill="#ff1a12"/>
<rect x="831.7" y="390.7" width="4.6" height="4.6" fill="#ff1a12"/>
<rect x="843.7" y="363.7" width="4.6" height="4.6" fill="#ffa41c"/>
<rect x="824.7" y="351.7" width="4.6" height="4.6" fill="#ff1a12"/>
<rect x="847.7" y="357.7" width="4.6" height="4.6" fill="#ff1a12"/>
<rect x="833.7" y="373.7" width="4.6" height="4.6" fill="#ff7a14"/>
<rect x="821.7" y="405.7" width="4.6" height="4.6" fill="#ff1a12"/>
<rect x="834.7" y="349.7" width="4.6" height="4.6" fill="#ff7a14"/>
<rect x="837.7" y="367.7" width="4.6" height="4.6" fill="#ffa41c"/>
<rect x="816.7" y="345.7" width="4.6" height="4.6" fill="#ff7a14"/>
<rect x="809.7" y="370.7" width="4.6" height="4.6" fill="#ff1a12"/>
<rect x="811.7" y="377.7" width="4.6" height="4.6" fill="#ff1a12"/>
<rect x="844.7" y="373.7" width="4.6" height="4.6" fill="#ffa41c"/>
<rect x="835.7" y="361.7" width="4.6" height="4.6" fill="#ff1a12"/>
<rect x="837.7" y="377.7" width="4.6" height="4.6" fill="#ff7a14"/>
<rect x="826.7" y="348.7" width="4.6" height="4.6" fill="#ff1a12"/>
<rect x="830.7" y="416.7" width="4.6" height="4.6" fill="#ffa41c"/>
<rect x="830.7" y="365.7" width="4.6" height="4.6" fill="#ff7a14"/>
<rect x="832.7" y="346.7" width="4.6" height="4.6" fill="#ff7a14"/>
<rect x="823.7" y="350.7" width="4.6" height="4.6" fill="#ffa41c"/>
<rect x="846.7" y="414.7" width="4.6" height="4.6" fill="#ff7a14"/>
<rect x="821.7" y="411.7" width="4.6" height="4.6" fill="#ff7a14"/>
<rect x="833.7" y="407.7" width="4.6" height="4.6" fill="#ff7a14"/>
<rect x="821.7" y="399.7" width="4.6" height="4.6" fill="#ff1a12"/>
<rect x="837.7" y="357.7" width="4.6" height="4.6" fill="#ff7a14"/>
<rect x="819.7" y="389.7" width="4.6" height="4.6" fill="#ff7a14"/>
<rect x="830.7" y="407.7" width="4.6" height="4.6" fill="#ff1a12"/>
<rect x="834.7" y="410.7" width="4.6" height="4.6" fill="#ff7a14"/>
<rect x="822.7" y="394.7" width="4.6" height="4.6" fill="#ff1a12"/>
<rect x="823.7" y="362.7" width="4.6" height="4.6" fill="#ff7a14"/>
<rect x="814.7" y="420.7" width="4.6" height="4.6" fill="#ff7a14"/>
<rect x="817.7" y="399.7" width="4.6" height="4.6" fill="#ff7a14"/>
<rect x="852.7" y="337.7" width="4.6" height="4.6" fill="#ff7a14"/>
<rect x="827.7" y="354.7" width="4.6" height="4.6" fill="#ff7a14"/>
<rect x="821.7" y="355.7" width="4.6" height="4.6" fill="#ff1a12"/>
<rect x="818.7" y="479.7" width="4.6" height="4.6" fill="#ff7a14"/>
<rect x="822.7" y="451.7" width="4.6" height="4.6" fill="#ffa41c"/>
<rect x="817.7" y="425.7" width="4.6" height="4.6" fill="#ff7a14"/>
<rect x="813.7" y="437.7" width="4.6" height="4.6" fill="#ffa41c"/>
<rect x="817.7" y="457.7" width="4.6" height="4.6" fill="#ffa41c"/>
<rect x="808.7" y="488.7" width="4.6" height="4.6" fill="#ffa41c"/>
<rect x="812.7" y="478.7" width="4.6" height="4.6" fill="#ff7a14"/>
<rect x="817.7" y="442.7" width="4.6" height="4.6" fill="#ffd81e"/>
<rect x="818.7" y="441.7" width="4.6" height="4.6" fill="#ffa41c"/>
<rect x="814.7" y="429.7" width="4.6" height="4.6" fill="#ffd81e"/>
<rect x="813.7" y="430.7" width="4.6" height="4.6" fill="#ff7a14"/>
<rect x="828.7" y="425.7" width="4.6" height="4.6" fill="#ff1a12"/>
<rect x="816.7" y="451.7" width="4.6" height="4.6" fill="#ffa41c"/>
<rect x="823.7" y="427.7" width="4.6" height="4.6" fill="#ffa41c"/>
<rect x="817.7" y="444.7" width="4.6" height="4.6" fill="#ffd81e"/>
<rect x="817.7" y="440.7" width="4.6" height="4.6" fill="#ff1a12"/>
<rect x="823.7" y="477.7" width="4.6" height="4.6" fill="#ff7a14"/>
<rect x="820.7" y="482.7" width="4.6" height="4.6" fill="#ff7a14"/>
<rect x="806.7" y="454.7" width="4.6" height="4.6" fill="#ffa41c"/>
<rect x="816.7" y="482.7" width="4.6" height="4.6" fill="#ff7a14"/>
<rect x="819.7" y="416.7" width="4.6" height="4.6" fill="#ffd81e"/>
<rect x="820.7" y="474.7" width="4.6" height="4.6" fill="#ffa41c"/>
<rect x="818.7" y="423.7" width="4.6" height="4.6" fill="#ffa41c"/>
<rect x="837.7" y="458.7" width="4.6" height="4.6" fill="#ffa41c"/>
<rect x="824.7" y="441.7" width="4.6" height="4.6" fill="#ffa41c"/>
<rect x="819.7" y="465.7" width="4.6" height="4.6" fill="#ffa41c"/>
<rect x="815.7" y="466.7" width="4.6" height="4.6" fill="#ff7a14"/>
<rect x="831.7" y="430.7" width="4.6" height="4.6" fill="#ff7a14"/>
<rect x="827.7" y="480.7" width="4.6" height="4.6" fill="#ff7a14"/>
<rect x="818.7" y="484.7" width="4.6" height="4.6" fill="#ff7a14"/>
<rect x="819.7" y="445.7" width="4.6" height="4.6" fill="#ff1a12"/>
<rect x="810.7" y="465.7" width="4.6" height="4.6" fill="#ff7a14"/>
<rect x="818.7" y="470.7" width="4.6" height="4.6" fill="#ffd81e"/>
<rect x="826.7" y="442.7" width="4.6" height="4.6" fill="#ff7a14"/>
<rect x="820.7" y="434.7" width="4.6" height="4.6" fill="#ff7a14"/>
<rect x="811.7" y="450.7" width="4.6" height="4.6" fill="#ff7a14"/>
<rect x="831.7" y="427.7" width="4.6" height="4.6" fill="#ff7a14"/>
<rect x="809.7" y="465.7" width="4.6" height="4.6" fill="#ff1a12"/>
<rect x="818.7" y="432.7" width="4.6" height="4.6" fill="#ffa41c"/>
<rect x="821.7" y="448.7" width="4.6" height="4.6" fill="#ff1a12"/>
<rect x="825.7" y="470.7" width="4.6" height="4.6" fill="#ff7a14"/>
<rect x="808.7" y="461.7" width="4.6" height="4.6" fill="#ffa41c"/>
<rect x="815.7" y="481.7" width="4.6" height="4.6" fill="#ff7a14"/>
<rect x="827.7" y="440.7" width="4.6" height="4.6" fill="#ffd81e"/>
<rect x="813.7" y="467.7" width="4.6" height="4.6" fill="#ff7a14"/>
<rect x="813.7" y="470.7" width="4.6" height="4.6" fill="#ffa41c"/>
<rect x="813.7" y="472.7" width="4.6" height="4.6" fill="#ffa41c"/>
<rect x="817.7" y="448.7" width="4.6" height="4.6" fill="#ffd81e"/>
<rect x="811.7" y="463.7" width="4.6" height="4.6" fill="#ff7a14"/>
<rect x="814.7" y="450.7" width="4.6" height="4.6" fill="#ffa41c"/>
<rect x="819.7" y="488.7" width="4.6" height="4.6" fill="#ff1a12"/>
<rect x="823.7" y="467.7" width="4.6" height="4.6" fill="#ff7a14"/>
<rect x="813.7" y="422.7" width="4.6" height="4.6" fill="#ff7a14"/>
<rect x="837.7" y="417.7" width="4.6" height="4.6" fill="#ff7a14"/>
<rect x="813.7" y="484.7" width="4.6" height="4.6" fill="#ff7a14"/>
<rect x="812.7" y="560.7" width="4.6" height="4.6" fill="#ff7a14"/>
<rect x="814.7" y="562.7" width="4.6" height="4.6" fill="#ff7a14"/>
<rect x="815.7" y="533.7" width="4.6" height="4.6" fill="#ffa41c"/>
<rect x="808.7" y="558.7" width="4.6" height="4.6" fill="#ffd81e"/>
<rect x="816.7" y="537.7" width="4.6" height="4.6" fill="#ffa41c"/>
<rect x="808.7" y="592.7" width="4.6" height="4.6" fill="#ffa41c"/>
<rect x="801.7" y="595.7" width="4.6" height="4.6" fill="#ffa41c"/>
<rect x="813.7" y="556.7" width="4.6" height="4.6" fill="#ff7a14"/>
<rect x="811.7" y="536.7" width="4.6" height="4.6" fill="#ffd81e"/>
<rect x="814.7" y="516.7" width="4.6" height="4.6" fill="#ff7a14"/>
<rect x="815.7" y="529.7" width="4.6" height="4.6" fill="#ffa41c"/>
<rect x="813.7" y="488.7" width="4.6" height="4.6" fill="#ffa41c"/>
<rect x="812.7" y="534.7" width="4.6" height="4.6" fill="#ffa41c"/>
<rect x="817.7" y="564.7" width="4.6" height="4.6" fill="#ffa41c"/>
<rect x="817.7" y="486.7" width="4.6" height="4.6" fill="#ffd81e"/>
<rect x="812.7" y="557.7" width="4.6" height="4.6" fill="#ffa41c"/>
<rect x="817.7" y="503.7" width="4.6" height="4.6" fill="#ffa41c"/>
<rect x="807.7" y="592.7" width="4.6" height="4.6" fill="#ffa41c"/>
<rect x="815.7" y="531.7" width="4.6" height="4.6" fill="#ffd81e"/>
<rect x="813.7" y="519.7" width="4.6" height="4.6" fill="#ffd81e"/>
<rect x="812.7" y="538.7" width="4.6" height="4.6" fill="#ff7a14"/>
<rect x="811.7" y="523.7" width="4.6" height="4.6" fill="#ffa41c"/>
<rect x="809.7" y="590.7" width="4.6" height="4.6" fill="#ffd81e"/>
<rect x="809.7" y="566.7" width="4.6" height="4.6" fill="#ffd81e"/>
<rect x="818.7" y="538.7" width="4.6" height="4.6" fill="#ffd81e"/>
<rect x="812.7" y="533.7" width="4.6" height="4.6" fill="#ffa41c"/>
<rect x="817.7" y="517.7" width="4.6" height="4.6" fill="#ff7a14"/>
<rect x="813.7" y="495.7" width="4.6" height="4.6" fill="#ffa41c"/>
<rect x="815.7" y="571.7" width="4.6" height="4.6" fill="#ffd81e"/>
<rect x="811.7" y="502.7" width="4.6" height="4.6" fill="#ffa41c"/>
<rect x="811.7" y="483.7" width="4.6" height="4.6" fill="#ffd81e"/>
<rect x="817.7" y="509.7" width="4.6" height="4.6" fill="#ffa41c"/>
<rect x="811.7" y="571.7" width="4.6" height="4.6" fill="#ffd81e"/>
<rect x="817.7" y="493.7" width="4.6" height="4.6" fill="#ffa41c"/>
<rect x="808.7" y="577.7" width="4.6" height="4.6" fill="#ff1a12"/>
<rect x="814.7" y="566.7" width="4.6" height="4.6" fill="#ff7a14"/>
<rect x="816.7" y="544.7" width="4.6" height="4.6" fill="#ffa41c"/>
<rect x="817.7" y="500.7" width="4.6" height="4.6" fill="#ffd81e"/>
<rect x="805.7" y="528.7" width="4.6" height="4.6" fill="#ffa41c"/>
<rect x="809.7" y="563.7" width="4.6" height="4.6" fill="#ffa41c"/>
<rect x="816.7" y="540.7" width="4.6" height="4.6" fill="#ffd81e"/>
<rect x="826.7" y="499.7" width="4.6" height="4.6" fill="#ffa41c"/>
<rect x="814.7" y="522.7" width="4.6" height="4.6" fill="#ffd81e"/>
<rect x="810.7" y="570.7" width="4.6" height="4.6" fill="#ffa41c"/>
<rect x="814.7" y="574.7" width="4.6" height="4.6" fill="#ffd81e"/>
<rect x="814.7" y="561.7" width="4.6" height="4.6" fill="#ffd81e"/>
<rect x="819.7" y="517.7" width="4.6" height="4.6" fill="#ffd81e"/>
<rect x="807.7" y="595.7" width="4.6" height="4.6" fill="#ff7a14"/>
<rect x="814.7" y="561.7" width="4.6" height="4.6" fill="#ffd81e"/>
<rect x="814.7" y="502.7" width="4.6" height="4.6" fill="#ffd81e"/>
<rect x="816.7" y="521.7" width="4.6" height="4.6" fill="#ffd81e"/>
<rect x="814.7" y="509.7" width="4.6" height="4.6" fill="#ffa41c"/>
<rect x="814.7" y="581.7" width="4.6" height="4.6" fill="#ffa41c"/>
<rect x="806.7" y="588.7" width="4.6" height="4.6" fill="#ffd81e"/>
<rect x="811.7" y="593.7" width="4.6" height="4.6" fill="#ffa41c"/>
<rect x="806.7" y="584.7" width="4.6" height="4.6" fill="#ffd81e"/>
<rect x="807.7" y="591.7" width="4.6" height="4.6" fill="#ffd81e"/>
<rect x="816.7" y="534.7" width="4.6" height="4.6" fill="#ff1a12"/>
<rect x="811.7" y="548.7" width="4.6" height="4.6" fill="#ffa41c"/>
<rect x="817.7" y="519.7" width="4.6" height="4.6" fill="#ffa41c"/>
<rect x="815.7" y="506.7" width="4.6" height="4.6" fill="#ffa41c"/>
<rect x="811.7" y="565.7" width="4.6" height="4.6" fill="#ffd81e"/>
<rect x="816.7" y="506.7" width="4.6" height="4.6" fill="#ffd81e"/>
<rect x="814.7" y="588.7" width="4.6" height="4.6" fill="#ff7a14"/>
<rect x="820.7" y="528.7" width="4.6" height="4.6" fill="#ff7a14"/>
<rect x="807.7" y="553.7" width="4.6" height="4.6" fill="#ffd81e"/>
<rect x="818.7" y="547.7" width="4.6" height="4.6" fill="#ffa41c"/>
<rect x="817.7" y="498.7" width="4.6" height="4.6" fill="#ffd81e"/>
<rect x="808.7" y="578.7" width="4.6" height="4.6" fill="#ffd81e"/>
<rect x="806.7" y="563.7" width="4.6" height="4.6" fill="#ffd81e"/>
<rect x="808.7" y="578.7" width="4.6" height="4.6" fill="#ff7a14"/>
<rect x="811.7" y="525.7" width="4.6" height="4.6" fill="#ffa41c"/>
<rect x="815.7" y="528.7" width="4.6" height="4.6" fill="#ff1a12"/>
<rect x="812.7" y="491.7" width="4.6" height="4.6" fill="#ffd81e"/>
<rect x="817.7" y="491.7" width="4.6" height="4.6" fill="#ffd81e"/>
<rect x="813.7" y="500.7" width="4.6" height="4.6" fill="#ff7a14"/>
<rect x="809.7" y="531.7" width="4.6" height="4.6" fill="#ffa41c"/>
<rect x="813.7" y="500.7" width="4.6" height="4.6" fill="#ff7a14"/>
<rect x="819.7" y="547.7" width="4.6" height="4.6" fill="#ffa41c"/>
<rect x="815.7" y="549.7" width="4.6" height="4.6" fill="#ffd81e"/>
<rect x="810.7" y="583.7" width="4.6" height="4.6" fill="#ff7a14"/>
<rect x="816.7" y="579.7" width="4.6" height="4.6" fill="#ff1a12"/>
<rect x="806.7" y="564.7" width="4.6" height="4.6" fill="#ff7a14"/>
<rect x="811.7" y="585.7" width="4.6" height="4.6" fill="#ffa41c"/>
<rect x="808.7" y="566.7" width="4.6" height="4.6" fill="#ffd81e"/>
<rect x="813.7" y="566.7" width="4.6" height="4.6" fill="#ffa41c"/>
<rect x="817.7" y="495.7" width="4.6" height="4.6" fill="#ffd81e"/>
<rect x="816.7" y="498.7" width="4.6" height="4.6" fill="#ffd81e"/>
<rect x="811.7" y="512.7" width="4.6" height="4.6" fill="#ffd81e"/>
<rect x="819.7" y="497.7" width="4.6" height="4.6" fill="#ffd81e"/>
<rect x="812.7" y="543.7" width="4.6" height="4.6" fill="#ffd81e"/>
<rect x="820.7" y="516.7" width="4.6" height="4.6" fill="#ffa41c"/>
<rect x="812.7" y="539.7" width="4.6" height="4.6" fill="#ffd81e"/>
<rect x="809.7" y="582.7" width="4.6" height="4.6" fill="#ffd81e"/>
<rect x="814.7" y="534.7" width="4.6" height="4.6" fill="#ffd81e"/>
<rect x="815.7" y="540.7" width="4.6" height="4.6" fill="#a8f020"/>
<rect x="819.7" y="505.7" width="4.6" height="4.6" fill="#ff20f0"/>
<rect x="816.7" y="530.7" width="4.6" height="4.6" fill="#a8f020"/>
<rect x="817.7" y="535.7" width="4.6" height="4.6" fill="#ff20f0"/>
<rect x="816.7" y="518.7" width="4.6" height="4.6" fill="#a8f020"/>
<rect x="810.7" y="612.7" width="4.6" height="4.6" fill="#ffa41c"/>
<rect x="791.7" y="624.7" width="4.6" height="4.6" fill="#ff1a12"/>
<rect x="797.7" y="649.7" width="4.6" height="4.6" fill="#ff1a12"/>
<rect x="809.7" y="662.7" width="4.6" height="4.6" fill="#ff1a12"/>
<rect x="803.7" y="660.7" width="4.6" height="4.6" fill="#ff7a14"/>
<rect x="796.7" y="696.7" width="4.6" height="4.6" fill="#ff7a14"/>
<rect x="789.7" y="618.7" width="4.6" height="4.6" fill="#ff1a12"/>
<rect x="807.7" y="715.7" width="4.6" height="4.6" fill="#ff1a12"/>
<rect x="805.7" y="702.7" width="4.6" height="4.6" fill="#ffd81e"/>
<rect x="792.7" y="687.7" width="4.6" height="4.6" fill="#ff1a12"/>
<rect x="798.7" y="672.7" width="4.6" height="4.6" fill="#ff7a14"/>
<rect x="797.7" y="685.7" width="4.6" height="4.6" fill="#ff7a14"/>
<rect x="804.7" y="650.7" width="4.6" height="4.6" fill="#ff7a14"/>
<rect x="793.7" y="693.7" width="4.6" height="4.6" fill="#ff1a12"/>
<rect x="800.7" y="648.7" width="4.6" height="4.6" fill="#ff1a12"/>
<rect x="799.7" y="673.7" width="4.6" height="4.6" fill="#ffa41c"/>
<rect x="799.7" y="652.7" width="4.6" height="4.6" fill="#ff1a12"/>
<rect x="802.7" y="601.7" width="4.6" height="4.6" fill="#ffa41c"/>
<rect x="798.7" y="704.7" width="4.6" height="4.6" fill="#ff7a14"/>
<rect x="790.7" y="670.7" width="4.6" height="4.6" fill="#ff7a14"/>
<rect x="797.7" y="673.7" width="4.6" height="4.6" fill="#ffd81e"/>
<rect x="799.7" y="694.7" width="4.6" height="4.6" fill="#ffa41c"/>
<rect x="801.7" y="714.7" width="4.6" height="4.6" fill="#ffd81e"/>
<rect x="795.7" y="597.7" width="4.6" height="4.6" fill="#ff7a14"/>
<rect x="803.7" y="664.7" width="4.6" height="4.6" fill="#ff7a14"/>
<rect x="802.7" y="675.7" width="4.6" height="4.6" fill="#ffa41c"/>
<rect x="807.7" y="602.7" width="4.6" height="4.6" fill="#ffa41c"/>
<rect x="805.7" y="684.7" width="4.6" height="4.6" fill="#ff7a14"/>
<rect x="790.7" y="658.7" width="4.6" height="4.6" fill="#ff7a14"/>
<rect x="816.7" y="668.7" width="4.6" height="4.6" fill="#ff7a14"/>
<rect x="802.7" y="666.7" width="4.6" height="4.6" fill="#ffa41c"/>
<rect x="802.7" y="632.7" width="4.6" height="4.6" fill="#ffa41c"/>
<rect x="796.7" y="716.7" width="4.6" height="4.6" fill="#ff7a14"/>
<rect x="798.7" y="701.7" width="4.6" height="4.6" fill="#ff7a14"/>
<rect x="797.7" y="647.7" width="4.6" height="4.6" fill="#ff1a12"/>
<rect x="810.7" y="619.7" width="4.6" height="4.6" fill="#ffa41c"/>
<rect x="798.7" y="669.7" width="4.6" height="4.6" fill="#ff7a14"/>
<rect x="807.7" y="659.7" width="4.6" height="4.6" fill="#ff7a14"/>
<rect x="791.7" y="684.7" width="4.6" height="4.6" fill="#ff7a14"/>
<rect x="798.7" y="607.7" width="4.6" height="4.6" fill="#ff7a14"/>
<rect x="812.7" y="598.7" width="4.6" height="4.6" fill="#ff1a12"/>
<rect x="784.7" y="698.7" width="4.6" height="4.6" fill="#ff1a12"/>
<rect x="809.7" y="686.7" width="4.6" height="4.6" fill="#ffa41c"/>
<rect x="799.7" y="603.7" width="4.6" height="4.6" fill="#ff7a14"/>
<rect x="806.7" y="631.7" width="4.6" height="4.6" fill="#ffd81e"/>
<rect x="801.7" y="695.7" width="4.6" height="4.6" fill="#ff7a14"/>
<rect x="792.7" y="713.7" width="4.6" height="4.6" fill="#ff7a14"/>
<rect x="807.7" y="692.7" width="4.6" height="4.6" fill="#ff1a12"/>
<rect x="796.7" y="659.7" width="4.6" height="4.6" fill="#ffa41c"/>
<rect x="801.7" y="618.7" width="4.6" height="4.6" fill="#ffa41c"/>
<rect x="797.7" y="661.7" width="4.6" height="4.6" fill="#ffd81e"/>
<rect x="801.7" y="712.7" width="4.6" height="4.6" fill="#ff7a14"/>
<rect x="807.7" y="615.7" width="4.6" height="4.6" fill="#ff7a14"/>
<rect x="796.7" y="718.7" width="4.6" height="4.6" fill="#ffa41c"/>
<rect x="797.7" y="620.7" width="4.6" height="4.6" fill="#ffa41c"/>
<rect x="799.7" y="702.7" width="4.6" height="4.6" fill="#ffa41c"/>
<rect x="794.7" y="677.7" width="4.6" height="4.6" fill="#ff1a12"/>
<rect x="794.7" y="699.7" width="4.6" height="4.6" fill="#ff1a12"/>
<rect x="798.7" y="665.7" width="4.6" height="4.6" fill="#ffa41c"/>
<rect x="808.7" y="637.7" width="4.6" height="4.6" fill="#ffd81e"/>
<rect x="782.7" y="753.7" width="4.6" height="4.6" fill="#ff1a12"/>
<rect x="761.7" y="797.7" width="4.6" height="4.6" fill="#ff1a12"/>
<rect x="763.7" y="751.7" width="4.6" height="4.6" fill="#ff1a12"/>
<rect x="762.7" y="762.7" width="4.6" height="4.6" fill="#ff7a14"/>
<rect x="787.7" y="744.7" width="4.6" height="4.6" fill="#ff1a12"/>
<rect x="752.7" y="733.7" width="4.6" height="4.6" fill="#ff7a14"/>
<rect x="811.7" y="725.7" width="4.6" height="4.6" fill="#ff7a14"/>
<rect x="775.7" y="777.7" width="4.6" height="4.6" fill="#ff7a14"/>
<rect x="788.7" y="757.7" width="4.6" height="4.6" fill="#ff7a14"/>
<rect x="759.7" y="763.7" width="4.6" height="4.6" fill="#ffa41c"/>
<rect x="778.7" y="756.7" width="4.6" height="4.6" fill="#ff1a12"/>
<rect x="764.7" y="787.7" width="4.6" height="4.6" fill="#ff7a14"/>
<rect x="783.7" y="758.7" width="4.6" height="4.6" fill="#ff7a14"/>
<rect x="812.7" y="736.7" width="4.6" height="4.6" fill="#ff7a14"/>
<rect x="782.7" y="743.7" width="4.6" height="4.6" fill="#ffa41c"/>
<rect x="766.7" y="754.7" width="4.6" height="4.6" fill="#ff1a12"/>
<rect x="807.7" y="736.7" width="4.6" height="4.6" fill="#ff1a12"/>
<rect x="771.7" y="758.7" width="4.6" height="4.6" fill="#ff7a14"/>
<rect x="765.7" y="773.7" width="4.6" height="4.6" fill="#ff7a14"/>
<rect x="819.7" y="737.7" width="4.6" height="4.6" fill="#ff7a14"/>
<rect x="771.7" y="786.7" width="4.6" height="4.6" fill="#ff1a12"/>
<rect x="781.7" y="745.7" width="4.6" height="4.6" fill="#ff7a14"/>
<rect x="783.7" y="745.7" width="4.6" height="4.6" fill="#ff7a14"/>
<rect x="767.7" y="751.7" width="4.6" height="4.6" fill="#ff7a14"/>
<rect x="797.7" y="747.7" width="4.6" height="4.6" fill="#ff7a14"/>
<rect x="778.7" y="741.7" width="4.6" height="4.6" fill="#ff1a12"/>
<rect x="789.7" y="763.7" width="4.6" height="4.6" fill="#ff7a14"/>
<rect x="779.7" y="731.7" width="4.6" height="4.6" fill="#ff7a14"/>
<rect x="755.7" y="766.7" width="4.6" height="4.6" fill="#ff1a12"/>
<rect x="751.7" y="790.7" width="4.6" height="4.6" fill="#ffa41c"/>
<rect x="684.7" y="600.7" width="4.6" height="4.6" fill="#ff7a14"/>
<rect x="692.7" y="607.7" width="4.6" height="4.6" fill="#ff7a14"/>
<rect x="691.7" y="594.7" width="4.6" height="4.6" fill="#ffa41c"/>
<rect x="690.7" y="613.7" width="4.6" height="4.6" fill="#ffa41c"/>
<rect x="690.7" y="590.7" width="4.6" height="4.6" fill="#ffa41c"/>
<rect x="686.7" y="611.7" width="4.6" height="4.6" fill="#ffd81e"/>
<rect x="695.7" y="596.7" width="4.6" height="4.6" fill="#ffa41c"/>
<rect x="693.7" y="611.7" width="4.6" height="4.6" fill="#ff1a12"/>
<rect x="695.7" y="613.7" width="4.6" height="4.6" fill="#ff7a14"/>
<rect x="690.7" y="604.7" width="4.6" height="4.6" fill="#ffd81e"/>
<rect x="679.7" y="632.7" width="4.6" height="4.6" fill="#ff1a12"/>
<rect x="689.7" y="587.7" width="4.6" height="4.6" fill="#ff7a14"/>
<rect x="689.7" y="590.7" width="4.6" height="4.6" fill="#ffa41c"/>
<rect x="685.7" y="617.7" width="4.6" height="4.6" fill="#ff1a12"/>
<rect x="691.7" y="620.7" width="4.6" height="4.6" fill="#ff7a14"/>
<rect x="685.7" y="617.7" width="4.6" height="4.6" fill="#ff7a14"/>
<rect x="692.7" y="613.7" width="4.6" height="4.6" fill="#ffd81e"/>
<rect x="689.7" y="633.7" width="4.6" height="4.6" fill="#ffa41c"/>
<rect x="676.7" y="636.7" width="4.6" height="4.6" fill="#ff7a14"/>
<rect x="691.7" y="589.7" width="4.6" height="4.6" fill="#ffd81e"/>
<rect x="1106.7" y="573.7" width="4.6" height="4.6" fill="#ff1a12"/>
<rect x="1088.7" y="492.7" width="4.6" height="4.6" fill="#ff7a14"/>
<rect x="1100.7" y="546.7" width="4.6" height="4.6" fill="#ff7a14"/>
<rect x="1089.7" y="480.7" width="4.6" height="4.6" fill="#ff1a12"/>
<rect x="1089.7" y="465.7" width="4.6" height="4.6" fill="#ff1a12"/>
<rect x="1067.7" y="450.7" width="4.6" height="4.6" fill="#ff1a12"/>
<rect x="1104.7" y="571.7" width="4.6" height="4.6" fill="#ff1a12"/>
<rect x="1089.7" y="498.7" width="4.6" height="4.6" fill="#ff1a12"/>
<rect x="1083.7" y="506.7" width="4.6" height="4.6" fill="#ff1a12"/>
<rect x="1084.7" y="484.7" width="4.6" height="4.6" fill="#ff1a12"/>
<rect x="1076.7" y="471.7" width="4.6" height="4.6" fill="#ff1a12"/>
<rect x="1070.7" y="465.7" width="4.6" height="4.6" fill="#ff1a12"/>
<rect x="1106.7" y="542.7" width="4.6" height="4.6" fill="#ff7a14"/>
<rect x="1067.7" y="495.7" width="4.6" height="4.6" fill="#ff1a12"/>
<rect x="1109.7" y="565.7" width="4.6" height="4.6" fill="#ff7a14"/>
<rect x="1101.7" y="581.7" width="4.6" height="4.6" fill="#ff1a12"/>
<rect x="1079.7" y="505.7" width="4.6" height="4.6" fill="#ff1a12"/>
<rect x="1089.7" y="565.7" width="4.6" height="4.6" fill="#ff1a12"/>
<rect x="1079.7" y="494.7" width="4.6" height="4.6" fill="#ff1a12"/>
<rect x="1113.7" y="496.7" width="4.6" height="4.6" fill="#ff7a14"/>
<rect x="1095.7" y="541.7" width="4.6" height="4.6" fill="#ff1a12"/>
<rect x="1117.7" y="573.7" width="4.6" height="4.6" fill="#ff1a12"/>
<rect x="1093.7" y="510.7" width="4.6" height="4.6" fill="#ff1a12"/>
<rect x="1090.7" y="573.7" width="4.6" height="4.6" fill="#ff1a12"/>
<rect x="1101.7" y="527.7" width="4.6" height="4.6" fill="#ff7a14"/>
<rect x="1105.7" y="497.7" width="4.6" height="4.6" fill="#ff1a12"/>
<rect x="1098.7" y="554.7" width="4.6" height="4.6" fill="#ff1a12"/>
<rect x="1100.7" y="519.7" width="4.6" height="4.6" fill="#ff1a12"/>
<rect x="1101.7" y="532.7" width="4.6" height="4.6" fill="#ff1a12"/>
<rect x="1094.7" y="463.7" width="4.6" height="4.6" fill="#ff1a12"/>
<rect x="1118.7" y="554.7" width="4.6" height="4.6" fill="#ff7a14"/>
<rect x="1121.7" y="561.7" width="4.6" height="4.6" fill="#ffa41c"/>
<rect x="1120.7" y="544.7" width="4.6" height="4.6" fill="#ff7a14"/>
<rect x="1119.7" y="534.7" width="4.6" height="4.6" fill="#ffa41c"/>
<rect x="1120.7" y="534.7" width="4.6" height="4.6" fill="#ff7a14"/>
<rect x="1119.7" y="541.7" width="4.6" height="4.6" fill="#ff7a14"/>
<rect x="1118.7" y="554.7" width="4.6" height="4.6" fill="#ff7a14"/>
<rect x="1119.7" y="562.7" width="4.6" height="4.6" fill="#ffa41c"/>
<rect x="1116.7" y="561.7" width="4.6" height="4.6" fill="#ffa41c"/>
<rect x="1118.7" y="553.7" width="4.6" height="4.6" fill="#ffa41c"/>
<rect x="1119.7" y="572.7" width="4.6" height="4.6" fill="#ffa41c"/>
<rect x="1118.7" y="562.7" width="4.6" height="4.6" fill="#ff7a14"/>
<rect x="1122.7" y="540.7" width="4.6" height="4.6" fill="#ff7a14"/>
<rect x="1118.7" y="551.7" width="4.6" height="4.6" fill="#ff7a14"/>
<rect x="1120.7" y="537.7" width="4.6" height="4.6" fill="#ff7a14"/>
<rect x="1119.7" y="539.7" width="4.6" height="4.6" fill="#ffa41c"/>
<rect x="1126.7" y="416.7" width="4.6" height="4.6" fill="#ffa41c"/>
<rect x="1114.7" y="399.7" width="4.6" height="4.6" fill="#ffa41c"/>
<rect x="1119.7" y="406.7" width="4.6" height="4.6" fill="#ff7a14"/>
<rect x="1123.7" y="431.7" width="4.6" height="4.6" fill="#ff7a14"/>
<rect x="1111.7" y="377.7" width="4.6" height="4.6" fill="#a8f020"/>
<rect x="1121.7" y="429.7" width="4.6" height="4.6" fill="#ffa41c"/>
<rect x="970.7" y="609.7" width="4.6" height="4.6" fill="#ff1a12"/>
<rect x="995.7" y="622.7" width="4.6" height="4.6" fill="#ff1a12"/>
<rect x="964.7" y="634.7" width="4.6" height="4.6" fill="#ff1a12"/>
<rect x="985.7" y="597.7" width="4.6" height="4.6" fill="#ff1a12"/>
<rect x="989.7" y="623.7" width="4.6" height="4.6" fill="#ff1a12"/>
<rect x="993.7" y="636.7" width="4.6" height="4.6" fill="#ff1a12"/>
<rect x="990.7" y="612.7" width="4.6" height="4.6" fill="#ff1a12"/>
<rect x="993.7" y="627.7" width="4.6" height="4.6" fill="#ff1a12"/>
<rect x="991.7" y="633.7" width="4.6" height="4.6" fill="#ff1a12"/>
<rect x="969.7" y="606.7" width="4.6" height="4.6" fill="#ff1a12"/>
<rect x="915.7" y="532.7" width="4.6" height="4.6" fill="#ff1a12"/>
<rect x="919.7" y="540.7" width="4.6" height="4.6" fill="#ff1a12"/>
<rect x="907.7" y="531.7" width="4.6" height="4.6" fill="#ff1a12"/>
<rect x="914.7" y="532.7" width="4.6" height="4.6" fill="#ff1a12"/>
<rect x="920.7" y="551.7" width="4.6" height="4.6" fill="#ff1a12"/>
<rect x="908.7" y="537.7" width="4.6" height="4.6" fill="#ff1a12"/>
<rect x="916.7" y="518.7" width="4.6" height="4.6" fill="#ff1a12"/>
<rect x="928.7" y="559.7" width="4.6" height="4.6" fill="#ff1a12"/>
<rect x="1032.7" y="466.7" width="4.6" height="4.6" fill="#ff1a12"/>
<rect x="1010.7" y="449.7" width="4.6" height="4.6" fill="#ff1a12"/>
<rect x="963.7" y="436.7" width="4.6" height="4.6" fill="#ff1a12"/>
<rect x="1050.7" y="468.7" width="4.6" height="4.6" fill="#ff1a12"/>
<rect x="979.7" y="440.7" width="4.6" height="4.6" fill="#ff1a12"/>
<rect x="1020.7" y="467.7" width="4.6" height="4.6" fill="#ff1a12"/>
<rect x="970.7" y="465.7" width="4.6" height="4.6" fill="#ff1a12"/>
<rect x="1038.7" y="443.7" width="4.6" height="4.6" fill="#ff1a12"/>
<rect x="1026.7" y="473.7" width="4.6" height="4.6" fill="#ff1a12"/>
<rect x="1006.7" y="451.7" width="4.6" height="4.6" fill="#ff1a12"/>
<rect x="994.7" y="248.7" width="4.6" height="4.6" fill="#ff1a12"/>
<rect x="1119.7" y="261.7" width="4.6" height="4.6" fill="#ff7a14"/>
<rect x="950.7" y="252.7" width="4.6" height="4.6" fill="#ff7a14"/>
<rect x="1035.7" y="255.7" width="4.6" height="4.6" fill="#ff7a14"/>
<rect x="987.7" y="257.7" width="4.6" height="4.6" fill="#ff7a14"/>
<rect x="951.7" y="252.7" width="4.6" height="4.6" fill="#ff7a14"/>
<rect x="1030.7" y="259.7" width="4.6" height="4.6" fill="#ff1a12"/>
<rect x="1082.7" y="256.7" width="4.6" height="4.6" fill="#ff1a12"/>
<rect x="1031.7" y="257.7" width="4.6" height="4.6" fill="#ff1a12"/>
<rect x="1062.7" y="268.7" width="4.6" height="4.6" fill="#ff1a12"/>
<rect x="1022.7" y="248.7" width="4.6" height="4.6" fill="#ff1a12"/>
<rect x="976.7" y="259.7" width="4.6" height="4.6" fill="#ff1a12"/>
<rect x="1099.7" y="265.7" width="4.6" height="4.6" fill="#ff7a14"/>
<rect x="871.7" y="237.7" width="4.6" height="4.6" fill="#ff7a14"/>
<rect x="1100.7" y="263.7" width="4.6" height="4.6" fill="#ffa41c"/>
<rect x="980.7" y="259.7" width="4.6" height="4.6" fill="#ff7a14"/>
<rect x="985.7" y="260.7" width="4.6" height="4.6" fill="#ffa41c"/>
<rect x="985.7" y="256.7" width="4.6" height="4.6" fill="#ff1a12"/>
<rect x="1075.7" y="250.7" width="4.6" height="4.6" fill="#ff7a14"/>
<rect x="1068.7" y="261.7" width="4.6" height="4.6" fill="#ff1a12"/>
<rect x="1000.7" y="249.7" width="4.6" height="4.6" fill="#ff1a12"/>
<rect x="927.7" y="253.7" width="4.6" height="4.6" fill="#ff7a14"/>
<rect x="945.7" y="248.7" width="4.6" height="4.6" fill="#ff7a14"/>
<rect x="903.7" y="250.7" width="4.6" height="4.6" fill="#ff1a12"/>
<rect x="752.7" y="175.7" width="4.6" height="4.6" fill="#ff1a12"/>
<rect x="772.7" y="176.7" width="4.6" height="4.6" fill="#ff1a12"/>
<rect x="809.7" y="183.7" width="4.6" height="4.6" fill="#ff1a12"/>
<rect x="764.7" y="181.7" width="4.6" height="4.6" fill="#ff1a12"/>
<rect x="790.7" y="177.7" width="4.6" height="4.6" fill="#ff1a12"/>
<rect x="766.7" y="178.7" width="4.6" height="4.6" fill="#ff1a12"/>
<rect x="795.7" y="181.7" width="4.6" height="4.6" fill="#ff1a12"/>
<rect x="727.7" y="179.7" width="4.6" height="4.6" fill="#ff1a12"/>
<rect x="822.7" y="183.7" width="4.6" height="4.6" fill="#ff1a12"/>
<rect x="765.7" y="171.7" width="4.6" height="4.6" fill="#ff1a12"/>
<rect x="763.7" y="176.7" width="4.6" height="4.6" fill="#ff1a12"/>
<rect x="760.7" y="176.7" width="4.6" height="4.6" fill="#ff1a12"/>
<rect x="751.7" y="181.7" width="4.6" height="4.6" fill="#ff1a12"/>
<rect x="818.7" y="178.7" width="4.6" height="4.6" fill="#ff1a12"/>
<rect x="779.7" y="214.7" width="4.6" height="4.6" fill="#ff1a12"/>
<rect x="714.7" y="209.7" width="4.6" height="4.6" fill="#ff1a12"/>
<rect x="748.7" y="208.7" width="4.6" height="4.6" fill="#ff1a12"/>
<rect x="700.7" y="210.7" width="4.6" height="4.6" fill="#ff1a12"/>
<rect x="699.7" y="212.7" width="4.6" height="4.6" fill="#ff1a12"/>
<rect x="765.7" y="222.7" width="4.6" height="4.6" fill="#ff1a12"/>
<rect x="756.7" y="214.7" width="4.6" height="4.6" fill="#ff1a12"/>
<rect x="755.7" y="214.7" width="4.6" height="4.6" fill="#ff1a12"/>
<rect x="721.7" y="216.7" width="4.6" height="4.6" fill="#ff1a12"/>
<rect x="768.7" y="219.7" width="4.6" height="4.6" fill="#ff1a12"/>
<rect x="761.7" y="212.7" width="4.6" height="4.6" fill="#ff1a12"/>
<rect x="768.7" y="219.7" width="4.6" height="4.6" fill="#ff1a12"/>
<rect x="1013.7" y="215.7" width="4.6" height="4.6" fill="#ff1a12"/>
<rect x="843.7" y="197.7" width="4.6" height="4.6" fill="#ff1a12"/>
<rect x="1064.7" y="120.7" width="4.6" height="4.6" fill="#ff1a12"/>
<rect x="939.7" y="333.7" width="4.6" height="4.6" fill="#ff1a12"/>
<rect x="864.7" y="200.7" width="4.6" height="4.6" fill="#ff7a14"/>
<rect x="1038.7" y="170.7" width="4.6" height="4.6" fill="#ff1a12"/>
<rect x="948.7" y="166.7" width="4.6" height="4.6" fill="#ff1a12"/>
<rect x="998.7" y="352.7" width="4.6" height="4.6" fill="#ff7a14"/>
<rect x="921.7" y="474.7" width="4.6" height="4.6" fill="#ff1a12"/>
<rect x="1033.7" y="255.7" width="4.6" height="4.6" fill="#ff1a12"/>
<rect x="1045.7" y="383.7" width="4.6" height="4.6" fill="#ff1a12"/>
<rect x="845.7" y="237.7" width="4.6" height="4.6" fill="#ff1a12"/>
<rect x="972.7" y="458.7" width="4.6" height="4.6" fill="#ff1a12"/>
<rect x="907.7" y="268.7" width="4.6" height="4.6" fill="#ff1a12"/>
<rect x="962.7" y="303.7" width="4.6" height="4.6" fill="#ff1a12"/>
<rect x="1065.7" y="343.7" width="4.6" height="4.6" fill="#ff1a12"/>
<rect x="971.7" y="173.7" width="4.6" height="4.6" fill="#ff1a12"/>
<rect x="1100.7" y="439.7" width="4.6" height="4.6" fill="#ff1a12"/>
<rect x="876.7" y="217.7" width="4.6" height="4.6" fill="#ff1a12"/>
<rect x="851.7" y="213.7" width="4.6" height="4.6" fill="#ff1a12"/>
<rect x="1077.7" y="119.7" width="4.6" height="4.6" fill="#ff1a12"/>
<rect x="1030.7" y="110.7" width="4.6" height="4.6" fill="#ff1a12"/>
<rect x="1059.7" y="281.7" width="4.6" height="4.6" fill="#ff1a12"/>
<rect x="912.7" y="372.7" width="4.6" height="4.6" fill="#ff1a12"/>
<rect x="1027.7" y="401.7" width="4.6" height="4.6" fill="#ff1a12"/>
<rect x="923.7" y="231.7" width="4.6" height="4.6" fill="#ff7a14"/>
<rect x="859.7" y="261.7" width="4.6" height="4.6" fill="#ff7a14"/>
<rect x="866.7" y="462.7" width="4.6" height="4.6" fill="#ff1a12"/>
<rect x="1002.7" y="275.7" width="4.6" height="4.6" fill="#ff1a12"/>
<rect x="924.7" y="283.7" width="4.6" height="4.6" fill="#ff7a14"/>
<rect x="532.7" y="486.7" width="4.6" height="4.6" fill="#ff1a12"/>
<rect x="536.7" y="405.7" width="4.6" height="4.6" fill="#ff1a12"/>
<rect x="572.7" y="435.7" width="4.6" height="4.6" fill="#ff1a12"/>
<rect x="570.7" y="379.7" width="4.6" height="4.6" fill="#ff1a12"/>
<rect x="666.7" y="445.7" width="4.6" height="4.6" fill="#ff1a12"/>
<rect x="495.7" y="470.7" width="4.6" height="4.6" fill="#ff1a12"/>
<rect x="677.7" y="427.7" width="4.6" height="4.6" fill="#ff7a14"/>
<rect x="515.7" y="421.7" width="4.6" height="4.6" fill="#ff1a12"/>
<rect x="742.7" y="452.7" width="4.6" height="4.6" fill="#ff1a12"/>
<rect x="532.7" y="485.7" width="4.6" height="4.6" fill="#ff1a12"/>
<rect x="522.7" y="435.7" width="4.6" height="4.6" fill="#ff1a12"/>
<rect x="710.7" y="386.7" width="4.6" height="4.6" fill="#ff7a14"/>
<rect x="728.7" y="386.7" width="4.6" height="4.6" fill="#ff7a14"/>
<rect x="685.7" y="469.7" width="4.6" height="4.6" fill="#ff7a14"/>
<rect x="615.7" y="456.7" width="4.6" height="4.6" fill="#ff7a14"/>
<rect x="608.7" y="395.7" width="4.6" height="4.6" fill="#ff1a12"/>
<rect x="631.7" y="420.7" width="4.6" height="4.6" fill="#ff7a14"/>
<rect x="728.7" y="440.7" width="4.6" height="4.6" fill="#ff1a12"/>
<rect x="626.7" y="467.7" width="4.6" height="4.6" fill="#ff1a12"/>
<rect x="711.7" y="458.7" width="4.6" height="4.6" fill="#ff7a14"/>
<rect x="649.7" y="387.7" width="4.6" height="4.6" fill="#ff7a14"/>
<rect x="723.7" y="459.7" width="4.6" height="4.6" fill="#ff7a14"/>
<rect x="1156.7" y="271.7" width="4.6" height="4.6" fill="#ff1a12"/>
<rect x="1252.7" y="130.7" width="4.6" height="4.6" fill="#ff1a12"/>
<rect x="1167.7" y="195.7" width="4.6" height="4.6" fill="#ff1a12"/>
<rect x="1188.7" y="449.7" width="4.6" height="4.6" fill="#ff1a12"/>
<rect x="1222.7" y="443.7" width="4.6" height="4.6" fill="#ff7a14"/>
<rect x="1142.7" y="259.7" width="4.6" height="4.6" fill="#ff1a12"/>
<rect x="1225.7" y="442.7" width="4.6" height="4.6" fill="#ff1a12"/>
<rect x="1198.7" y="440.7" width="4.6" height="4.6" fill="#ff1a12"/>
<rect x="1144.7" y="260.7" width="4.6" height="4.6" fill="#ff1a12"/>
<rect x="1143.7" y="248.7" width="4.6" height="4.6" fill="#ff1a12"/>
<rect x="819.7" y="866.7" width="4.6" height="4.6" fill="#ff1a12"/>
<rect x="890.7" y="880.7" width="4.6" height="4.6" fill="#ff1a12"/>
<rect x="858.7" y="893.7" width="4.6" height="4.6" fill="#ff1a12"/>
<rect x="868.7" y="854.7" width="4.6" height="4.6" fill="#ff1a12"/>
<rect x="813.7" y="862.7" width="4.6" height="4.6" fill="#ff7a14"/>
<rect x="810.7" y="832.7" width="4.6" height="4.6" fill="#ffa41c"/>
<rect x="792.7" y="889.7" width="4.6" height="4.6" fill="#ffd81e"/>
<rect x="715.7" y="886.7" width="4.6" height="4.6" fill="#ff1a12"/>
<rect x="789.7" y="906.7" width="4.6" height="4.6" fill="#ffa41c"/>
<rect x="855.7" y="870.7" width="4.6" height="4.6" fill="#ff7a14"/>
<rect x="752.7" y="875.7" width="4.6" height="4.6" fill="#ff7a14"/>
<rect x="795.7" y="885.7" width="4.6" height="4.6" fill="#ff7a14"/>
<rect x="893.7" y="872.7" width="4.6" height="4.6" fill="#ff1a12"/>
<rect x="746.7" y="873.7" width="4.6" height="4.6" fill="#ff7a14"/>
<rect x="826.7" y="908.7" width="4.6" height="4.6" fill="#ff1a12"/>
<rect x="893.7" y="855.7" width="4.6" height="4.6" fill="#ff7a14"/>
<rect x="875.7" y="870.7" width="4.6" height="4.6" fill="#ff1a12"/>
<rect x="644.7" y="891.7" width="4.6" height="4.6" fill="#ff7a14"/>
<rect x="798.7" y="885.7" width="4.6" height="4.6" fill="#ff1a12"/>
<rect x="715.7" y="853.7" width="4.6" height="4.6" fill="#ff1a12"/>
<rect x="846.7" y="897.7" width="4.6" height="4.6" fill="#ff7a14"/>
<rect x="781.7" y="850.7" width="4.6" height="4.6" fill="#ff1a12"/>
<rect x="872.7" y="878.7" width="4.6" height="4.6" fill="#ffd81e"/>
<rect x="895.7" y="869.7" width="4.6" height="4.6" fill="#ff1a12"/>
<rect x="838.7" y="847.7" width="4.6" height="4.6" fill="#ffd81e"/>
<rect x="813.7" y="862.7" width="4.6" height="4.6" fill="#ff7a14"/>
<rect x="800.7" y="896.7" width="4.6" height="4.6" fill="#ffa41c"/>
<rect x="782.7" y="861.7" width="4.6" height="4.6" fill="#ff1a12"/>
<rect x="668.7" y="898.7" width="4.6" height="4.6" fill="#ff7a14"/>
<rect x="693.7" y="867.7" width="4.6" height="4.6" fill="#ff7a14"/>
<rect x="683.7" y="869.7" width="4.6" height="4.6" fill="#ff1a12"/>
<rect x="863.7" y="897.7" width="4.6" height="4.6" fill="#ff1a12"/>
<rect x="768.7" y="858.7" width="4.6" height="4.6" fill="#ff7a14"/>
<rect x="676.7" y="871.7" width="4.6" height="4.6" fill="#ff1a12"/>
<rect x="750.7" y="865.7" width="4.6" height="4.6" fill="#ff7a14"/>
<rect x="766.7" y="892.7" width="4.6" height="4.6" fill="#ff1a12"/>
<rect x="668.7" y="886.7" width="4.6" height="4.6" fill="#ffa41c"/>
<rect x="662.7" y="897.7" width="4.6" height="4.6" fill="#ff7a14"/>
<rect x="780.7" y="858.7" width="4.6" height="4.6" fill="#ff1a12"/>
<rect x="798.7" y="888.7" width="4.6" height="4.6" fill="#ff7a14"/>
<rect x="901.7" y="885.7" width="4.6" height="4.6" fill="#ff1a12"/>
<rect x="767.7" y="872.7" width="4.6" height="4.6" fill="#ff1a12"/>
<rect x="753.7" y="903.7" width="4.6" height="4.6" fill="#ff7a14"/>
<rect x="726.7" y="869.7" width="4.6" height="4.6" fill="#ff1a12"/>
<rect x="681.7" y="867.7" width="4.6" height="4.6" fill="#ffa41c"/>
<rect x="680.7" y="897.7" width="4.6" height="4.6" fill="#ff7a14"/>
<rect x="855.7" y="896.7" width="4.6" height="4.6" fill="#ff1a12"/>
<rect x="649.7" y="883.7" width="4.6" height="4.6" fill="#ff7a14"/>
<rect x="782.7" y="894.7" width="4.6" height="4.6" fill="#ff7a14"/>
<rect x="658.7" y="895.7" width="4.6" height="4.6" fill="#ffa41c"/>
<rect x="907.7" y="870.7" width="4.6" height="4.6" fill="#ff1a12"/>
<rect x="874.7" y="837.7" width="4.6" height="4.6" fill="#ff1a12"/>
<rect x="884.7" y="861.7" width="4.6" height="4.6" fill="#ff1a12"/>
<rect x="891.7" y="891.7" width="4.6" height="4.6" fill="#ffa41c"/>
<rect x="859.7" y="915.7" width="4.6" height="4.6" fill="#ffa41c"/>
<rect x="907.7" y="838.7" width="4.6" height="4.6" fill="#ff1a12"/>
<rect x="710.7" y="896.7" width="4.6" height="4.6" fill="#ff1a12"/>
<rect x="881.7" y="861.7" width="4.6" height="4.6" fill="#ff1a12"/>
<rect x="694.7" y="891.7" width="4.6" height="4.6" fill="#ff1a12"/>
<rect x="842.7" y="882.7" width="4.6" height="4.6" fill="#ffa41c"/>
<rect x="710.7" y="870.7" width="4.6" height="4.6" fill="#ffa41c"/>
<rect x="760.7" y="902.7" width="4.6" height="4.6" fill="#ff7a14"/>
<rect x="753.7" y="884.7" width="4.6" height="4.6" fill="#ff1a12"/>
<rect x="681.7" y="857.7" width="4.6" height="4.6" fill="#ffa41c"/>
<rect x="768.7" y="886.7" width="4.6" height="4.6" fill="#ff1a12"/>
<rect x="722.7" y="895.7" width="4.6" height="4.6" fill="#ff1a12"/>
<rect x="778.7" y="876.7" width="4.6" height="4.6" fill="#ff7a14"/>
<rect x="876.7" y="855.7" width="4.6" height="4.6" fill="#ff1a12"/>
<rect x="832.7" y="904.7" width="4.6" height="4.6" fill="#ff1a12"/>
<rect x="706.7" y="869.7" width="4.6" height="4.6" fill="#ff1a12"/>
<rect x="817.7" y="885.7" width="4.6" height="4.6" fill="#ffa41c"/>
<rect x="882.7" y="873.7" width="4.6" height="4.6" fill="#ff7a14"/>
<rect x="774.7" y="897.7" width="4.6" height="4.6" fill="#ff1a12"/>
<rect x="859.7" y="862.7" width="4.6" height="4.6" fill="#ffa41c"/>
<rect x="829.7" y="858.7" width="4.6" height="4.6" fill="#ff1a12"/>
<rect x="799.7" y="868.7" width="4.6" height="4.6" fill="#ff1a12"/>
<rect x="833.7" y="880.7" width="4.6" height="4.6" fill="#ff7a14"/>
<rect x="751.7" y="884.7" width="4.6" height="4.6" fill="#ff1a12"/>
<rect x="755.7" y="881.7" width="4.6" height="4.6" fill="#ff7a14"/>
<rect x="665.7" y="891.7" width="4.6" height="4.6" fill="#ff1a12"/>
<rect x="866.7" y="869.7" width="4.6" height="4.6" fill="#ff1a12"/>
<rect x="862.7" y="852.7" width="4.6" height="4.6" fill="#ffa41c"/>
<rect x="668.7" y="873.7" width="4.6" height="4.6" fill="#ffd81e"/>
<rect x="694.7" y="858.7" width="4.6" height="4.6" fill="#ff1a12"/>
<rect x="845.7" y="872.7" width="4.6" height="4.6" fill="#ff7a14"/>
<rect x="890.7" y="882.7" width="4.6" height="4.6" fill="#ff7a14"/>
<rect x="892.7" y="896.7" width="4.6" height="4.6" fill="#ff1a12"/>
<rect x="732.7" y="861.7" width="4.6" height="4.6" fill="#ff7a14"/>
<rect x="880.7" y="870.7" width="4.6" height="4.6" fill="#ff7a14"/>
<rect x="668.7" y="899.7" width="4.6" height="4.6" fill="#ff7a14"/>
<rect x="805.7" y="890.7" width="4.6" height="4.6" fill="#ff7a14"/>
<rect x="790.7" y="864.7" width="4.6" height="4.6" fill="#ff7a14"/>
<rect x="666.7" y="891.7" width="4.6" height="4.6" fill="#ff1a12"/>
<rect x="700.7" y="864.7" width="4.6" height="4.6" fill="#ff1a12"/>
<rect x="820.7" y="887.7" width="4.6" height="4.6" fill="#ff1a12"/>
<rect x="819.7" y="875.7" width="4.6" height="4.6" fill="#ff7a14"/>
<rect x="701.7" y="886.7" width="4.6" height="4.6" fill="#ff7a14"/>
<rect x="792.7" y="925.7" width="4.6" height="4.6" fill="#ff7a14"/>
<rect x="695.7" y="862.7" width="4.6" height="4.6" fill="#ff7a14"/>
<rect x="791.7" y="878.7" width="4.6" height="4.6" fill="#ff1a12"/>
<rect x="832.7" y="867.7" width="4.6" height="4.6" fill="#ff1a12"/>
<rect x="764.7" y="892.7" width="4.6" height="4.6" fill="#ff7a14"/>
<rect x="718.7" y="855.7" width="4.6" height="4.6" fill="#ff1a12"/>
<rect x="858.7" y="865.7" width="4.6" height="4.6" fill="#ffa41c"/>
<rect x="648.7" y="867.7" width="4.6" height="4.6" fill="#ffa41c"/>
<rect x="851.7" y="876.7" width="4.6" height="4.6" fill="#ff1a12"/>
<rect x="863.7" y="894.7" width="4.6" height="4.6" fill="#ffd81e"/>
<rect x="788.7" y="858.7" width="4.6" height="4.6" fill="#ffa41c"/>
<rect x="642.7" y="882.7" width="4.6" height="4.6" fill="#ffa41c"/>
<rect x="890.7" y="890.7" width="4.6" height="4.6" fill="#ff7a14"/>
<rect x="993.7" y="856.7" width="4.6" height="4.6" fill="#ff1a12"/>
<rect x="1045.7" y="845.7" width="4.6" height="4.6" fill="#ff7a14"/>
<rect x="1010.7" y="849.7" width="4.6" height="4.6" fill="#ffa41c"/>
<rect x="1104.7" y="872.7" width="4.6" height="4.6" fill="#ffd81e"/>
<rect x="1079.7" y="858.7" width="4.6" height="4.6" fill="#ffa41c"/>
<rect x="1077.7" y="848.7" width="4.6" height="4.6" fill="#ff7a14"/>
<rect x="1120.7" y="870.7" width="4.6" height="4.6" fill="#ff1a12"/>
<rect x="1103.7" y="852.7" width="4.6" height="4.6" fill="#ff7a14"/>
<rect x="1077.7" y="852.7" width="4.6" height="4.6" fill="#a8f020"/>
<rect x="1024.7" y="868.7" width="4.6" height="4.6" fill="#ff1a12"/>
<rect x="909.7" y="854.7" width="4.6" height="4.6" fill="#ffa41c"/>
<rect x="1116.7" y="869.7" width="4.6" height="4.6" fill="#ffa41c"/>
<rect x="1069.7" y="858.7" width="4.6" height="4.6" fill="#ffa41c"/>
<rect x="965.7" y="876.7" width="4.6" height="4.6" fill="#ff1a12"/>
<rect x="1126.7" y="868.7" width="4.6" height="4.6" fill="#ffd81e"/>
<rect x="1071.7" y="861.7" width="4.6" height="4.6" fill="#ffa41c"/>
<rect x="990.7" y="874.7" width="4.6" height="4.6" fill="#ffa41c"/>
<rect x="1021.7" y="852.7" width="4.6" height="4.6" fill="#ff7a14"/>
<rect x="918.7" y="874.7" width="4.6" height="4.6" fill="#ffd81e"/>
<rect x="1138.7" y="860.7" width="4.6" height="4.6" fill="#ffd81e"/>
<rect x="1043.7" y="874.7" width="4.6" height="4.6" fill="#a8f020"/>
<rect x="937.7" y="856.7" width="4.6" height="4.6" fill="#ff7a14"/>
<rect x="945.7" y="856.7" width="4.6" height="4.6" fill="#ff7a14"/>
<rect x="907.7" y="856.7" width="4.6" height="4.6" fill="#ff1a12"/>
<rect x="1096.7" y="862.7" width="4.6" height="4.6" fill="#ff1a12"/>
<rect x="910.7" y="848.7" width="4.6" height="4.6" fill="#ff7a14"/>
<rect x="1135.7" y="861.7" width="4.6" height="4.6" fill="#ffd81e"/>
<rect x="1080.7" y="870.7" width="4.6" height="4.6" fill="#ff1a12"/>
<rect x="1009.7" y="859.7" width="4.6" height="4.6" fill="#ffd81e"/>
<rect x="1093.7" y="871.7" width="4.6" height="4.6" fill="#ff1a12"/>
<rect x="1019.7" y="873.7" width="4.6" height="4.6" fill="#ff1a12"/>
<rect x="969.7" y="858.7" width="4.6" height="4.6" fill="#ff1a12"/>
<rect x="1021.7" y="857.7" width="4.6" height="4.6" fill="#ff7a14"/>
<rect x="993.7" y="865.7" width="4.6" height="4.6" fill="#ffa41c"/>
<rect x="1060.7" y="875.7" width="4.6" height="4.6" fill="#ffd81e"/>
<rect x="1080.7" y="862.7" width="4.6" height="4.6" fill="#ff1a12"/>
<rect x="1099.7" y="844.7" width="4.6" height="4.6" fill="#ff1a12"/>
<rect x="1076.7" y="867.7" width="4.6" height="4.6" fill="#ff7a14"/>
<rect x="1036.7" y="884.7" width="4.6" height="4.6" fill="#ffa41c"/>
<rect x="1137.7" y="870.7" width="4.6" height="4.6" fill="#ff1a12"/>
<rect x="999.7" y="877.7" width="4.6" height="4.6" fill="#ff1a12"/>
<rect x="910.7" y="866.7" width="4.6" height="4.6" fill="#ffd81e"/>
<rect x="966.7" y="872.7" width="4.6" height="4.6" fill="#ff7a14"/>
<rect x="1036.7" y="880.7" width="4.6" height="4.6" fill="#ffa41c"/>
<rect x="1135.7" y="854.7" width="4.6" height="4.6" fill="#a8f020"/>
<rect x="1080.7" y="863.7" width="4.6" height="4.6" fill="#ff1a12"/>
<rect x="1114.7" y="843.7" width="4.6" height="4.6" fill="#ff1a12"/>
<rect x="1081.7" y="870.7" width="4.6" height="4.6" fill="#ff7a14"/>
<rect x="1088.7" y="829.7" width="4.6" height="4.6" fill="#ff1a12"/>
<rect x="984.7" y="855.7" width="4.6" height="4.6" fill="#ff7a14"/>
<rect x="1106.7" y="861.7" width="4.6" height="4.6" fill="#ff7a14"/>
<rect x="981.7" y="868.7" width="4.6" height="4.6" fill="#ffd81e"/>
<rect x="1075.7" y="859.7" width="4.6" height="4.6" fill="#ff7a14"/>
<rect x="1102.7" y="846.7" width="4.6" height="4.6" fill="#ffd81e"/>
<rect x="1007.7" y="872.7" width="4.6" height="4.6" fill="#ffd81e"/>
<rect x="982.7" y="868.7" width="4.6" height="4.6" fill="#ffa41c"/>
<rect x="883.7" y="860.7" width="4.6" height="4.6" fill="#ff1a12"/>
<rect x="938.7" y="870.7" width="4.6" height="4.6" fill="#ffa41c"/>
<rect x="1003.7" y="860.7" width="4.6" height="4.6" fill="#ff7a14"/>
<rect x="1054.7" y="875.7" width="4.6" height="4.6" fill="#ff7a14"/>
<rect x="1006.7" y="875.7" width="4.6" height="4.6" fill="#ffd81e"/>
<rect x="1067.7" y="867.7" width="4.6" height="4.6" fill="#ffd81e"/>
<rect x="893.7" y="848.7" width="4.6" height="4.6" fill="#ffa41c"/>
<rect x="1051.7" y="864.7" width="4.6" height="4.6" fill="#ff1a12"/>
<rect x="942.7" y="855.7" width="4.6" height="4.6" fill="#ff1a12"/>
<rect x="883.7" y="870.7" width="4.6" height="4.6" fill="#ff7a14"/>
<rect x="968.7" y="839.7" width="4.6" height="4.6" fill="#ffd81e"/>
<rect x="1115.7" y="869.7" width="4.6" height="4.6" fill="#ffd81e"/>
<rect x="937.7" y="852.7" width="4.6" height="4.6" fill="#ff1a12"/>
<rect x="873.7" y="863.7" width="4.6" height="4.6" fill="#ff1a12"/>
<rect x="964.7" y="873.7" width="4.6" height="4.6" fill="#ffa41c"/>
<rect x="1090.7" y="850.7" width="4.6" height="4.6" fill="#ff1a12"/>
<rect x="966.7" y="861.7" width="4.6" height="4.6" fill="#ff7a14"/>
<rect x="1109.7" y="872.7" width="4.6" height="4.6" fill="#ff1a12"/>
<rect x="1014.7" y="854.7" width="4.6" height="4.6" fill="#ff7a14"/>
<rect x="910.7" y="871.7" width="4.6" height="4.6" fill="#ff1a12"/>
<rect x="1112.7" y="836.7" width="4.6" height="4.6" fill="#a8f020"/>
<rect x="946.7" y="876.7" width="4.6" height="4.6" fill="#ff7a14"/>
<rect x="1007.7" y="875.7" width="4.6" height="4.6" fill="#ffd81e"/>
<rect x="1020.7" y="872.7" width="4.6" height="4.6" fill="#ff7a14"/>
<rect x="976.7" y="855.7" width="4.6" height="4.6" fill="#ff1a12"/>
<rect x="1093.7" y="854.7" width="4.6" height="4.6" fill="#ff1a12"/>
<rect x="1022.7" y="878.7" width="4.6" height="4.6" fill="#ff7a14"/>
<rect x="970.7" y="869.7" width="4.6" height="4.6" fill="#ff1a12"/>
<rect x="1009.7" y="857.7" width="4.6" height="4.6" fill="#ffa41c"/>
<rect x="1062.7" y="858.7" width="4.6" height="4.6" fill="#ff7a14"/>
<rect x="1115.7" y="843.7" width="4.6" height="4.6" fill="#ffd81e"/>
<rect x="1095.7" y="885.7" width="4.6" height="4.6" fill="#a8f020"/>
<rect x="1015.7" y="852.7" width="4.6" height="4.6" fill="#ffa41c"/>
<rect x="1092.7" y="865.7" width="4.6" height="4.6" fill="#ff7a14"/>
<rect x="981.7" y="863.7" width="4.6" height="4.6" fill="#ff1a12"/>
<rect x="940.7" y="861.7" width="4.6" height="4.6" fill="#ffd81e"/>
<rect x="1099.7" y="866.7" width="4.6" height="4.6" fill="#ffd81e"/>
<rect x="979.7" y="856.7" width="4.6" height="4.6" fill="#ff7a14"/>
<rect x="914.7" y="892.7" width="4.6" height="4.6" fill="#ffa41c"/>
<rect x="979.7" y="875.7" width="4.6" height="4.6" fill="#ffd81e"/>
<rect x="1152.7" y="867.7" width="4.6" height="4.6" fill="#ff1a12"/>
<rect x="921.7" y="864.7" width="4.6" height="4.6" fill="#ffd81e"/>
<rect x="914.7" y="869.7" width="4.6" height="4.6" fill="#ffa41c"/>
<rect x="985.7" y="864.7" width="4.6" height="4.6" fill="#ff7a14"/>
<rect x="1020.7" y="851.7" width="4.6" height="4.6" fill="#ffd81e"/>
<rect x="1044.7" y="849.7" width="4.6" height="4.6" fill="#ff1a12"/>
<rect x="1042.7" y="849.7" width="4.6" height="4.6" fill="#a8f020"/>
<rect x="949.7" y="858.7" width="4.6" height="4.6" fill="#ff1a12"/>
<rect x="890.7" y="872.7" width="4.6" height="4.6" fill="#ffa41c"/>
<rect x="1018.7" y="855.7" width="4.6" height="4.6" fill="#ff1a12"/>
<rect x="959.7" y="881.7" width="4.6" height="4.6" fill="#a8f020"/>
<rect x="1008.7" y="858.7" width="4.6" height="4.6" fill="#ffa41c"/>
<rect x="1100.7" y="851.7" width="4.6" height="4.6" fill="#ff7a14"/>
<rect x="1001.7" y="866.7" width="4.6" height="4.6" fill="#ffd81e"/>
<rect x="995.7" y="866.7" width="4.6" height="4.6" fill="#ff1a12"/>
<rect x="970.7" y="852.7" width="4.6" height="4.6" fill="#ffa41c"/>
<rect x="982.7" y="862.7" width="4.6" height="4.6" fill="#ff1a12"/>
<rect x="980.7" y="854.7" width="4.6" height="4.6" fill="#ffd81e"/>
<rect x="968.7" y="867.7" width="4.6" height="4.6" fill="#ff1a12"/>
<rect x="934.7" y="850.7" width="4.6" height="4.6" fill="#ffa41c"/>
<rect x="881.7" y="867.7" width="4.6" height="4.6" fill="#ff1a12"/>
<rect x="1031.7" y="866.7" width="4.6" height="4.6" fill="#ff7a14"/>
<rect x="1058.7" y="865.7" width="4.6" height="4.6" fill="#ff1a12"/>
<rect x="951.7" y="863.7" width="4.6" height="4.6" fill="#ffa41c"/>
<rect x="1012.7" y="858.7" width="4.6" height="4.6" fill="#ff7a14"/>
<rect x="1063.7" y="867.7" width="4.6" height="4.6" fill="#ff7a14"/>
<rect x="1028.7" y="851.7" width="4.6" height="4.6" fill="#ff1a12"/>
<rect x="967.7" y="857.7" width="4.6" height="4.6" fill="#ff1a12"/>
<rect x="949.7" y="853.7" width="4.6" height="4.6" fill="#ff1a12"/>
<rect x="1001.7" y="850.7" width="4.6" height="4.6" fill="#ffd81e"/>
<rect x="1092.7" y="860.7" width="4.6" height="4.6" fill="#ff1a12"/>
<rect x="1022.7" y="857.7" width="4.6" height="4.6" fill="#ffa41c"/>
<rect x="946.7" y="867.7" width="4.6" height="4.6" fill="#ff7a14"/>
<rect x="1077.7" y="869.7" width="4.6" height="4.6" fill="#ff1a12"/>
<rect x="958.7" y="863.7" width="4.6" height="4.6" fill="#ff1a12"/>
<rect x="1105.7" y="873.7" width="4.6" height="4.6" fill="#ffa41c"/>
<rect x="945.7" y="878.7" width="4.6" height="4.6" fill="#ff7a14"/>
<rect x="973.7" y="850.7" width="4.6" height="4.6" fill="#ffd81e"/>
<rect x="950.7" y="870.7" width="4.6" height="4.6" fill="#ff1a12"/>
<rect x="1080.7" y="846.7" width="4.6" height="4.6" fill="#ff7a14"/>
<rect x="1116.7" y="886.7" width="4.6" height="4.6" fill="#ffd81e"/>
<rect x="1014.7" y="864.7" width="4.6" height="4.6" fill="#ffd81e"/>
<rect x="1051.7" y="861.7" width="4.6" height="4.6" fill="#ff1a12"/>
<rect x="984.7" y="869.7" width="4.6" height="4.6" fill="#ffd81e"/>
<rect x="1003.7" y="869.7" width="4.6" height="4.6" fill="#ffa41c"/>
<rect x="1057.7" y="865.7" width="4.6" height="4.6" fill="#ff1a12"/>
<rect x="962.7" y="876.7" width="4.6" height="4.6" fill="#a8f020"/>
<rect x="1034.7" y="864.7" width="4.6" height="4.6" fill="#ffd81e"/>
<rect x="1125.7" y="869.7" width="4.6" height="4.6" fill="#ff1a12"/>
<rect x="1066.7" y="854.7" width="4.6" height="4.6" fill="#ffa41c"/>
<rect x="890.7" y="854.7" width="4.6" height="4.6" fill="#ff1a12"/>
<rect x="965.7" y="856.7" width="4.6" height="4.6" fill="#ffa41c"/>
<rect x="1025.7" y="844.7" width="4.6" height="4.6" fill="#ffd81e"/>
<rect x="971.7" y="876.7" width="4.6" height="4.6" fill="#ffa41c"/>
<rect x="1210.7" y="875.7" width="4.6" height="4.6" fill="#ff1a12"/>
<rect x="1171.7" y="863.7" width="4.6" height="4.6" fill="#ff1a12"/>
<rect x="1130.7" y="867.7" width="4.6" height="4.6" fill="#ff1a12"/>
<rect x="1172.7" y="863.7" width="4.6" height="4.6" fill="#ff7a14"/>
<rect x="1274.7" y="884.7" width="4.6" height="4.6" fill="#ff1a12"/>
<rect x="1337.7" y="872.7" width="4.6" height="4.6" fill="#ff1a12"/>
<rect x="1357.7" y="867.7" width="4.6" height="4.6" fill="#ff7a14"/>
<rect x="1174.7" y="856.7" width="4.6" height="4.6" fill="#ff7a14"/>
<rect x="1142.7" y="872.7" width="4.6" height="4.6" fill="#ff1a12"/>
<rect x="1374.7" y="866.7" width="4.6" height="4.6" fill="#ffa41c"/>
<rect x="1345.7" y="877.7" width="4.6" height="4.6" fill="#ff7a14"/>
<rect x="1330.7" y="874.7" width="4.6" height="4.6" fill="#ff1a12"/>
<rect x="1224.7" y="873.7" width="4.6" height="4.6" fill="#ff7a14"/>
<rect x="1358.7" y="862.7" width="4.6" height="4.6" fill="#ff7a14"/>
<rect x="1286.7" y="880.7" width="4.6" height="4.6" fill="#ff1a12"/>
<rect x="1228.7" y="845.7" width="4.6" height="4.6" fill="#ff1a12"/>
<rect x="1386.7" y="891.7" width="4.6" height="4.6" fill="#ff1a12"/>
<rect x="1454.7" y="878.7" width="4.6" height="4.6" fill="#ffa41c"/>
<rect x="1250.7" y="872.7" width="4.6" height="4.6" fill="#ffd81e"/>
<rect x="1302.7" y="868.7" width="4.6" height="4.6" fill="#ff1a12"/>
<rect x="1319.7" y="866.7" width="4.6" height="4.6" fill="#ff1a12"/>
<rect x="1428.7" y="870.7" width="4.6" height="4.6" fill="#ff7a14"/>
<rect x="1288.7" y="874.7" width="4.6" height="4.6" fill="#ff1a12"/>
<rect x="1276.7" y="880.7" width="4.6" height="4.6" fill="#ff1a12"/>
<rect x="1220.7" y="873.7" width="4.6" height="4.6" fill="#ffa41c"/>
<rect x="1168.7" y="857.7" width="4.6" height="4.6" fill="#ff1a12"/>
<rect x="1233.7" y="844.7" width="4.6" height="4.6" fill="#ffa41c"/>
<rect x="1231.7" y="867.7" width="4.6" height="4.6" fill="#ff7a14"/>
<rect x="1315.7" y="869.7" width="4.6" height="4.6" fill="#ff1a12"/>
<rect x="1206.7" y="852.7" width="4.6" height="4.6" fill="#ff7a14"/>
<rect x="1319.7" y="872.7" width="4.6" height="4.6" fill="#ff7a14"/>
<rect x="1454.7" y="882.7" width="4.6" height="4.6" fill="#ff1a12"/>
<rect x="1175.7" y="861.7" width="4.6" height="4.6" fill="#ffa41c"/>
<rect x="1356.7" y="872.7" width="4.6" height="4.6" fill="#a8f020"/>
<rect x="1285.7" y="842.7" width="4.6" height="4.6" fill="#ff7a14"/>
<rect x="1210.7" y="855.7" width="4.6" height="4.6" fill="#ff1a12"/>
<rect x="1147.7" y="872.7" width="4.6" height="4.6" fill="#ff1a12"/>
<rect x="1253.7" y="867.7" width="4.6" height="4.6" fill="#ffa41c"/>
<rect x="1357.7" y="864.7" width="4.6" height="4.6" fill="#ff1a12"/>
<rect x="1157.7" y="875.7" width="4.6" height="4.6" fill="#ffa41c"/>
<rect x="1415.7" y="861.7" width="4.6" height="4.6" fill="#ff7a14"/>
<rect x="1254.7" y="866.7" width="4.6" height="4.6" fill="#ffa41c"/>
<rect x="1334.7" y="872.7" width="4.6" height="4.6" fill="#ff1a12"/>
<rect x="1286.7" y="886.7" width="4.6" height="4.6" fill="#ff1a12"/>
<rect x="1280.7" y="870.7" width="4.6" height="4.6" fill="#ff1a12"/>
<rect x="1327.7" y="877.7" width="4.6" height="4.6" fill="#ff1a12"/>
<rect x="1400.7" y="869.7" width="4.6" height="4.6" fill="#ff7a14"/>
<rect x="1425.7" y="881.7" width="4.6" height="4.6" fill="#ff7a14"/>
<rect x="1377.7" y="866.7" width="4.6" height="4.6" fill="#ff1a12"/>
<rect x="1400.7" y="853.7" width="4.6" height="4.6" fill="#ff7a14"/>
<rect x="1263.7" y="861.7" width="4.6" height="4.6" fill="#ffa41c"/>
<rect x="1391.7" y="871.7" width="4.6" height="4.6" fill="#ff7a14"/>
<rect x="1155.7" y="878.7" width="4.6" height="4.6" fill="#ff1a12"/>
<rect x="1271.7" y="851.7" width="4.6" height="4.6" fill="#ff1a12"/>
<rect x="1267.7" y="876.7" width="4.6" height="4.6" fill="#ff1a12"/>
<rect x="1257.7" y="854.7" width="4.6" height="4.6" fill="#ff7a14"/>
<rect x="1201.7" y="875.7" width="4.6" height="4.6" fill="#ff7a14"/>
<rect x="1277.7" y="857.7" width="4.6" height="4.6" fill="#ff1a12"/>
<rect x="1216.7" y="868.7" width="4.6" height="4.6" fill="#ff7a14"/>
<rect x="1229.7" y="859.7" width="4.6" height="4.6" fill="#ff7a14"/>
<rect x="1314.7" y="856.7" width="4.6" height="4.6" fill="#ff7a14"/>
<rect x="1133.7" y="860.7" width="4.6" height="4.6" fill="#ff1a12"/>
<rect x="1432.7" y="878.7" width="4.6" height="4.6" fill="#ffa41c"/>
<rect x="1282.7" y="879.7" width="4.6" height="4.6" fill="#ff1a12"/>
<rect x="1164.7" y="855.7" width="4.6" height="4.6" fill="#ff1a12"/>
<rect x="1290.7" y="868.7" width="4.6" height="4.6" fill="#ffa41c"/>
<rect x="1160.7" y="869.7" width="4.6" height="4.6" fill="#ff7a14"/>
<rect x="1284.7" y="860.7" width="4.6" height="4.6" fill="#ff7a14"/>
<rect x="1321.7" y="860.7" width="4.6" height="4.6" fill="#ff7a14"/>
<rect x="1419.7" y="855.7" width="4.6" height="4.6" fill="#ff1a12"/>
<rect x="1567.7" y="830.7" width="4.6" height="4.6" fill="#ff1a12"/>
<rect x="1436.7" y="817.7" width="4.6" height="4.6" fill="#ff1a12"/>
<rect x="1612.7" y="834.7" width="4.6" height="4.6" fill="#ff1a12"/>
<rect x="1486.7" y="870.7" width="4.6" height="4.6" fill="#ff1a12"/>
<rect x="1685.7" y="839.7" width="4.6" height="4.6" fill="#ff7a14"/>
<rect x="1736.7" y="832.7" width="4.6" height="4.6" fill="#ff1a12"/>
<rect x="1521.7" y="832.7" width="4.6" height="4.6" fill="#ffa41c"/>
<rect x="1728.7" y="831.7" width="4.6" height="4.6" fill="#ff7a14"/>
<rect x="1819.7" y="796.7" width="4.6" height="4.6" fill="#ff1a12"/>
<rect x="1679.7" y="811.7" width="4.6" height="4.6" fill="#ff1a12"/>
<rect x="1485.7" y="857.7" width="4.6" height="4.6" fill="#ff7a14"/>
<rect x="1616.7" y="828.7" width="4.6" height="4.6" fill="#ff1a12"/>
<rect x="1564.7" y="872.7" width="4.6" height="4.6" fill="#ffa41c"/>
<rect x="1806.7" y="799.7" width="4.6" height="4.6" fill="#ff1a12"/>
<rect x="1574.7" y="831.7" width="4.6" height="4.6" fill="#ffa41c"/>
<rect x="1651.7" y="839.7" width="4.6" height="4.6" fill="#ff7a14"/>
<rect x="1632.7" y="810.7" width="4.6" height="4.6" fill="#ff1a12"/>
<rect x="1574.7" y="838.7" width="4.6" height="4.6" fill="#ff7a14"/>
<rect x="1699.7" y="854.7" width="4.6" height="4.6" fill="#ff1a12"/>
<rect x="1615.7" y="862.7" width="4.6" height="4.6" fill="#ff1a12"/>
<rect x="1495.7" y="828.7" width="4.6" height="4.6" fill="#ff7a14"/>
<rect x="1744.7" y="799.7" width="4.6" height="4.6" fill="#ff7a14"/>
<rect x="1663.7" y="808.7" width="4.6" height="4.6" fill="#ff1a12"/>
<rect x="1719.7" y="808.7" width="4.6" height="4.6" fill="#ff7a14"/>
<rect x="1711.7" y="833.7" width="4.6" height="4.6" fill="#ff7a14"/>
<rect x="1601.7" y="834.7" width="4.6" height="4.6" fill="#ff1a12"/>
<rect x="1687.7" y="824.7" width="4.6" height="4.6" fill="#ffa41c"/>
<rect x="1618.7" y="836.7" width="4.6" height="4.6" fill="#ff1a12"/>
<rect x="1729.7" y="797.7" width="4.6" height="4.6" fill="#ff1a12"/>
<rect x="1826.7" y="826.7" width="4.6" height="4.6" fill="#ff1a12"/>
<rect x="1419.7" y="777.7" width="4.6" height="4.6" fill="#ff7a14"/>
<rect x="1514.7" y="668.7" width="4.6" height="4.6" fill="#ff7a14"/>
<rect x="1388.7" y="669.7" width="4.6" height="4.6" fill="#ff1a12"/>
<rect x="1560.7" y="857.7" width="4.6" height="4.6" fill="#ff7a14"/>
<rect x="1580.7" y="868.7" width="4.6" height="4.6" fill="#ffd81e"/>
<rect x="1439.7" y="802.7" width="4.6" height="4.6" fill="#ff1a12"/>
<rect x="1156.7" y="629.7" width="4.6" height="4.6" fill="#ff7a14"/>
<rect x="1670.7" y="731.7" width="4.6" height="4.6" fill="#ff7a14"/>
<rect x="1249.7" y="793.7" width="4.6" height="4.6" fill="#ff7a14"/>
<rect x="1215.7" y="685.7" width="4.6" height="4.6" fill="#ff7a14"/>
<rect x="1434.7" y="795.7" width="4.6" height="4.6" fill="#ff1a12"/>
<rect x="1601.7" y="764.7" width="4.6" height="4.6" fill="#ff7a14"/>
<rect x="1605.7" y="838.7" width="4.6" height="4.6" fill="#ff7a14"/>
<rect x="1695.7" y="777.7" width="4.6" height="4.6" fill="#ff7a14"/>
<rect x="1435.7" y="827.7" width="4.6" height="4.6" fill="#ff1a12"/>
<rect x="1375.7" y="789.7" width="4.6" height="4.6" fill="#ff7a14"/>
<rect x="1615.7" y="844.7" width="4.6" height="4.6" fill="#ff7a14"/>
<rect x="1651.7" y="876.7" width="4.6" height="4.6" fill="#ff1a12"/>
<rect x="1297.7" y="689.7" width="4.6" height="4.6" fill="#ff1a12"/>
<rect x="1602.7" y="846.7" width="4.6" height="4.6" fill="#ff7a14"/>
<rect x="1174.7" y="708.7" width="4.6" height="4.6" fill="#ff7a14"/>
<rect x="1624.7" y="639.7" width="4.6" height="4.6" fill="#ff7a14"/>
<rect x="1588.7" y="822.7" width="4.6" height="4.6" fill="#ff7a14"/>
<rect x="1696.7" y="804.7" width="4.6" height="4.6" fill="#ff1a12"/>
<rect x="1689.7" y="744.7" width="4.6" height="4.6" fill="#ffd81e"/>
<rect x="1456.7" y="816.7" width="4.6" height="4.6" fill="#ff7a14"/>
<rect x="1152.7" y="632.7" width="4.6" height="4.6" fill="#ff7a14"/>
<rect x="1168.7" y="721.7" width="4.6" height="4.6" fill="#ff7a14"/>
<rect x="1620.7" y="660.7" width="4.6" height="4.6" fill="#ff1a12"/>
<rect x="1613.7" y="720.7" width="4.6" height="4.6" fill="#ff7a14"/>
<rect x="1218.7" y="797.7" width="4.6" height="4.6" fill="#ff1a12"/>
<rect x="1674.7" y="718.7" width="4.6" height="4.6" fill="#ff1a12"/>
<rect x="1311.7" y="655.7" width="4.6" height="4.6" fill="#ff7a14"/>
<rect x="1227.7" y="687.7" width="4.6" height="4.6" fill="#ff1a12"/>
<rect x="1617.7" y="659.7" width="4.6" height="4.6" fill="#ff1a12"/>
<rect x="1655.7" y="798.7" width="4.6" height="4.6" fill="#ff1a12"/>
<rect x="1183.7" y="687.7" width="4.6" height="4.6" fill="#ff1a12"/>
<rect x="1180.7" y="690.7" width="4.6" height="4.6" fill="#ff1a12"/>
<rect x="1547.7" y="870.7" width="4.6" height="4.6" fill="#ff1a12"/>
<rect x="1271.7" y="658.7" width="4.6" height="4.6" fill="#ff1a12"/>
<rect x="1541.7" y="757.7" width="4.6" height="4.6" fill="#ff1a12"/>
<rect x="1376.7" y="708.7" width="4.6" height="4.6" fill="#ff1a12"/>
<rect x="1560.7" y="834.7" width="4.6" height="4.6" fill="#ff7a14"/>
<rect x="1418.7" y="808.7" width="4.6" height="4.6" fill="#ffd81e"/>
<rect x="1669.7" y="744.7" width="4.6" height="4.6" fill="#ff7a14"/>
<rect x="1220.7" y="736.7" width="4.6" height="4.6" fill="#ff1a12"/>
<rect x="1396.7" y="760.7" width="4.6" height="4.6" fill="#ffa41c"/>
<rect x="1327.7" y="712.7" width="4.6" height="4.6" fill="#ff7a14"/>
<rect x="1427.7" y="751.7" width="4.6" height="4.6" fill="#ff7a14"/>
<rect x="1139.7" y="722.7" width="4.6" height="4.6" fill="#ff7a14"/>
<rect x="1430.7" y="694.7" width="4.6" height="4.6" fill="#ff1a12"/>
<rect x="1520.7" y="770.7" width="4.6" height="4.6" fill="#ff1a12"/>
<rect x="1139.7" y="746.7" width="4.6" height="4.6" fill="#ff7a14"/>
<rect x="1569.7" y="767.7" width="4.6" height="4.6" fill="#ff1a12"/>
<rect x="1531.7" y="690.7" width="4.6" height="4.6" fill="#ff7a14"/>
<rect x="1510.7" y="824.7" width="4.6" height="4.6" fill="#ff1a12"/>
<rect x="1383.7" y="716.7" width="4.6" height="4.6" fill="#ff1a12"/>
<rect x="1330.7" y="617.7" width="4.6" height="4.6" fill="#ff1a12"/>
<rect x="1373.7" y="663.7" width="4.6" height="4.6" fill="#ff7a14"/>
<rect x="1336.7" y="778.7" width="4.6" height="4.6" fill="#ff1a12"/>
<rect x="1352.7" y="914.7" width="4.6" height="4.6" fill="#ff7a14"/>
<rect x="1556.7" y="924.7" width="4.6" height="4.6" fill="#ff1a12"/>
<rect x="1323.7" y="895.7" width="4.6" height="4.6" fill="#ff1a12"/>
<rect x="1206.7" y="896.7" width="4.6" height="4.6" fill="#ff1a12"/>
<rect x="1250.7" y="910.7" width="4.6" height="4.6" fill="#ff7a14"/>
<rect x="790.7" y="912.7" width="4.6" height="4.6" fill="#ff1a12"/>
<rect x="1079.7" y="909.7" width="4.6" height="4.6" fill="#ff7a14"/>
<rect x="1687.7" y="899.7" width="4.6" height="4.6" fill="#ff1a12"/>
<rect x="1379.7" y="918.7" width="4.6" height="4.6" fill="#ff1a12"/>
<rect x="997.7" y="917.7" width="4.6" height="4.6" fill="#ff1a12"/>
<rect x="1223.7" y="926.7" width="4.6" height="4.6" fill="#ff1a12"/>
<rect x="1667.7" y="918.7" width="4.6" height="4.6" fill="#ff1a12"/>
<rect x="1097.7" y="904.7" width="4.6" height="4.6" fill="#ff1a12"/>
<rect x="1339.7" y="896.7" width="4.6" height="4.6" fill="#ff1a12"/>
<rect x="1489.7" y="894.7" width="4.6" height="4.6" fill="#ff1a12"/>
<rect x="824.7" y="918.7" width="4.6" height="4.6" fill="#ff1a12"/>
<rect x="1401.7" y="906.7" width="4.6" height="4.6" fill="#ff1a12"/>
<rect x="740.7" y="928.7" width="4.6" height="4.6" fill="#ff1a12"/>
<rect x="705.7" y="896.7" width="4.6" height="4.6" fill="#ff1a12"/>
<rect x="1712.7" y="906.7" width="4.6" height="4.6" fill="#ff1a12"/>
<rect x="1607.7" y="899.7" width="4.6" height="4.6" fill="#ff1a12"/>
<rect x="1573.7" y="914.7" width="4.6" height="4.6" fill="#ff7a14"/>
<rect x="1624.7" y="901.7" width="4.6" height="4.6" fill="#ff1a12"/>
<rect x="1587.7" y="967.7" width="4.6" height="4.6" fill="#ff1a12"/>
<rect x="1491.7" y="962.7" width="4.6" height="4.6" fill="#ff7a14"/>
<rect x="1478.7" y="929.7" width="4.6" height="4.6" fill="#ff1a12"/>
<rect x="1708.7" y="976.7" width="4.6" height="4.6" fill="#ff7a14"/>
<rect x="807.7" y="926.7" width="4.6" height="4.6" fill="#ff1a12"/>
<rect x="1373.7" y="923.7" width="4.6" height="4.6" fill="#ff1a12"/>
<rect x="1512.7" y="955.7" width="4.6" height="4.6" fill="#ff1a12"/>
<rect x="1799.7" y="901.7" width="4.6" height="4.6" fill="#ff1a12"/>
<rect x="1719.7" y="988.7" width="4.6" height="4.6" fill="#ff1a12"/>
<rect x="933.7" y="715.7" width="4.6" height="4.6" fill="#ff1a12"/>
<rect x="1125.7" y="671.7" width="4.6" height="4.6" fill="#ff1a12"/>
<rect x="992.7" y="826.7" width="4.6" height="4.6" fill="#ff1a12"/>
<rect x="1064.7" y="530.7" width="4.6" height="4.6" fill="#ff1a12"/>
<rect x="935.7" y="721.7" width="4.6" height="4.6" fill="#ff1a12"/>
<rect x="944.7" y="667.7" width="4.6" height="4.6" fill="#ff1a12"/>
<rect x="883.7" y="632.7" width="4.6" height="4.6" fill="#ff1a12"/>
<rect x="1075.7" y="787.7" width="4.6" height="4.6" fill="#ff1a12"/>
<rect x="973.7" y="800.7" width="4.6" height="4.6" fill="#ff1a12"/>
<rect x="1013.7" y="806.7" width="4.6" height="4.6" fill="#ff1a12"/>
<rect x="960.7" y="746.7" width="4.6" height="4.6" fill="#ff1a12"/>
<rect x="1127.7" y="793.7" width="4.6" height="4.6" fill="#ff1a12"/>
<rect x="984.7" y="631.7" width="4.6" height="4.6" fill="#ff7a14"/>
<rect x="939.7" y="569.7" width="4.6" height="4.6" fill="#ff1a12"/>
<rect x="892.7" y="780.7" width="4.6" height="4.6" fill="#ff1a12"/>
<rect x="969.7" y="820.7" width="4.6" height="4.6" fill="#ff1a12"/>
<rect x="1106.7" y="604.7" width="4.6" height="4.6" fill="#ff7a14"/>
<rect x="1125.7" y="670.7" width="4.6" height="4.6" fill="#ff7a14"/>
<rect x="955.7" y="576.7" width="4.6" height="4.6" fill="#ff1a12"/>
<rect x="1069.7" y="815.7" width="4.6" height="4.6" fill="#ff1a12"/>
</g>
<!-- robot / odometry markers -->
<circle cx="1002.8" cy="534.9" r="18.5" fill="url(#cov)"/>
<path d="M952 531.3L1001 532.6M953 529.9L1000 533.6M955 532.6L1001 531.6" stroke="#ff0a0a" stroke-width="1.6" fill="none"/>
<path d="M1003 538L1036.7 684" stroke="#8c9440" stroke-width="0.85" fill="none"/>
<path d="M1003 533V540" stroke="#5fb050" stroke-width="1"/>
<path d="M997 536.5H1008" stroke="#e8e8e8" stroke-width="1.6" stroke-dasharray="1.4 0.7"/>
<path d="M1002.6 530.5L1004.6 534" stroke="#f0d0f0" stroke-width="1"/>
<path d="M1037 683V690" stroke="#40c040" stroke-width="1"/><path d="M1036 686V690" stroke="#4040e0" stroke-width="1"/>
<path d="M1038 690.5H1046" stroke="#e01818" stroke-width="1"/>
<path d="M1034 692.5H1040" stroke="#f0f0f0" stroke-width="1.6"/>
<!-- yaw rate gauge -->
<g fill="none">
<circle cx="1504.2" cy="156" r="44.5" stroke="#20bcb6" stroke-width="5.6"/>
<circle cx="1504.2" cy="156" r="33.2" stroke="#1f9693" stroke-width="1.5"/>
<clipPath id="half"><rect x="1499.6" y="110" width="60" height="92"/></clipPath>
<g clip-path="url(#half)"><circle cx="1504.2" cy="156" r="32.7" stroke="#1fbfb9" stroke-width="10.4"/>
<circle cx="1504.2" cy="156" r="32.9" stroke="#22d6ce" stroke-width="4.4"/></g>
</g>
</svg>
<span class="t" style="left:1486.60px;top:150.11px;font-size:16.6px;font-weight:700;color:#20bcb6;letter-spacing:0.976px;">0.00</span>
<span class="t" style="left:1464.70px;top:207.71px;font-size:16.6px;font-weight:700;color:#20bcb6;letter-spacing:0.966px;">Yaw Rate</span>
<div class="a" style="left:486px;top:99px;width:1px;height:927px;background:#fbfbfb;"></div><div class="a" style="left:486px;top:1025px;width:1347px;height:1px;background:#fbfbfb;"></div>
<div class="a" style="left:1747px;top:978px;width:101px;height:24px;box-sizing:border-box;border:1px solid #17a0fa;background:linear-gradient(#063c4e,#03242f 55%,#02161d);"></div>
<svg class="a" style="left:1747px;top:978px" width="101" height="24" viewBox="1747 978 101 24" fill="none" stroke="#fff" stroke-width="1.5">
<path d="M1755.7 986.2H1768.1V992.3H1755.7ZM1761.9 982.8V996.9" stroke-width="1.9"/>
<circle cx="1782.9" cy="989.6" r="2.1" stroke-width="1.3"/>
<circle cx="1791.9" cy="989.9" r="1.55" fill="#fff" stroke="none"/><path d="M1793.45 990.1Q1793.3 993.2 1790.3 994.8L1789.8 994.1Q1791.7 992.8 1791.3 991Z" fill="#fff" stroke="none"/>
<path d="M1802.8 987H1807.6M1805.4 983.2V996.8L1803.6 996.2M1802.8 992.6L1807.8 990.4M1809.6 983.4L1811 985.6M1816 983.2L1814.6 985.6M1808.6 987.2H1817M1808.2 991.8H1817.2M1811.2 987.2V992C1811.2 994.6 1810.4 996 1809 997.2M1814.6 987.2V997.4" stroke-width="1.5"/>
<g transform="translate(1832.9 990.2)"><circle r="3.9" stroke-width="2.7"/><path d="M4.16 2.40L5.72 3.30M0.00 4.80L0.00 6.60M-4.16 2.40L-5.72 3.30M-4.16 -2.40L-5.72 -3.30M-0.00 -4.80L-0.00 -6.60M4.16 -2.40L5.72 -3.30" stroke-width="2.5"/></g>
</svg>
<div class="a" style="left:1720px;top:1000px;width:129px;height:49.4px;overflow:hidden;z-index:5;"><span class="t" style="left:10.3px;top:12.25px;font-size:41px;line-height:1;font-weight:700;color:#fe0000;transform-origin:0 0;transform:scaleX(0.619);-webkit-text-stroke:2px #fe0000;">cxy<span style="font-size:37px">5</span>.com</span></div>
</body></html>
